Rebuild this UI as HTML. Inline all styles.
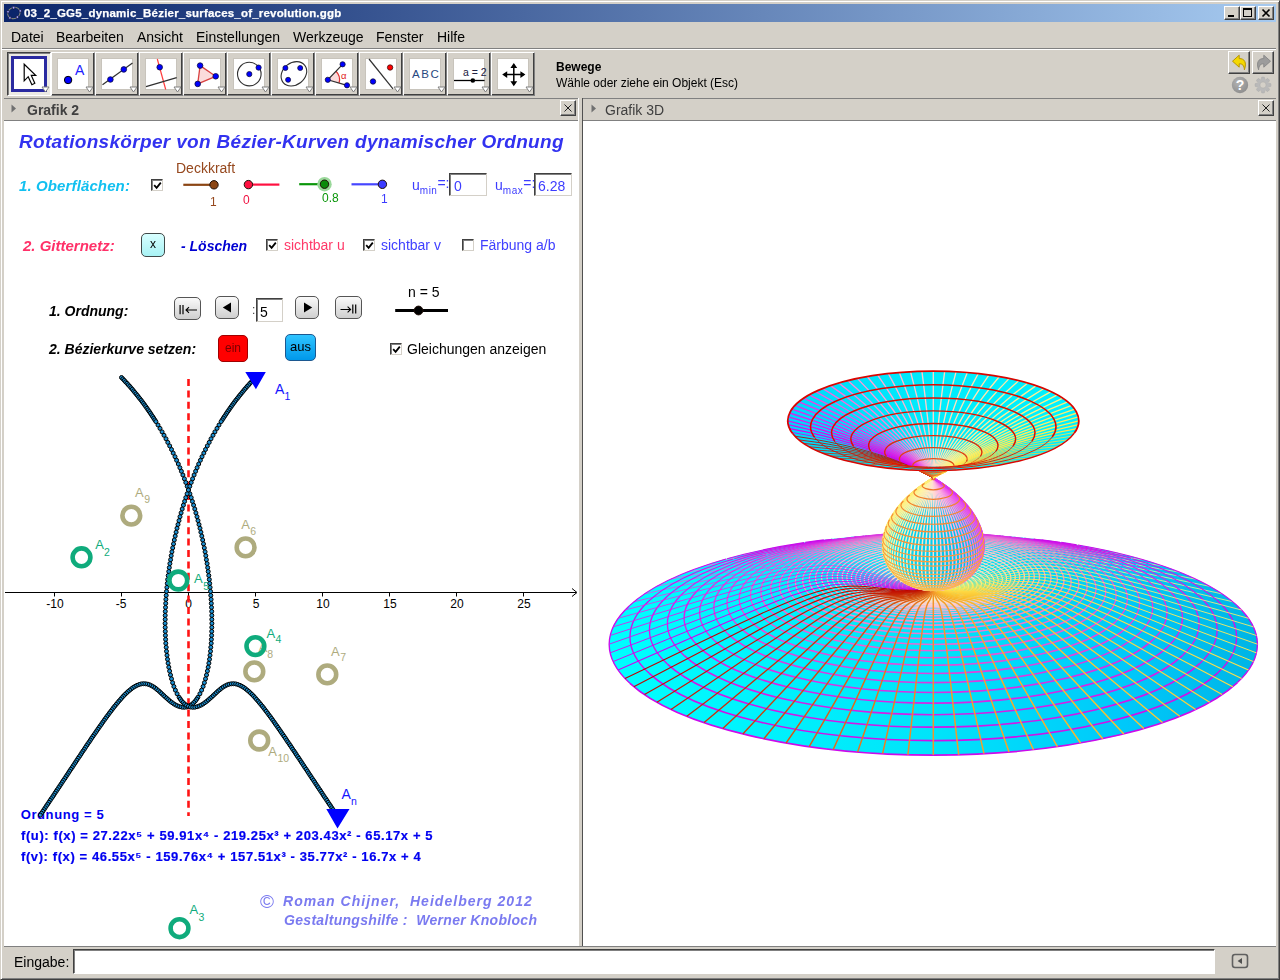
<!DOCTYPE html>
<html lang="de"><head><meta charset="utf-8"><title>GeoGebra</title>
<style>
*{box-sizing:border-box;margin:0;padding:0}
html,body{width:1280px;height:980px;overflow:hidden;background:#d4d0c8;font-family:"Liberation Sans",sans-serif;font-size:14px;color:#000}
.a{position:absolute}
.t{position:absolute;white-space:nowrap;line-height:1;will-change:transform}
.menu,.btn,.inp{will-change:transform}
#title{left:4px;top:4px;width:1272px;height:18px;background:linear-gradient(90deg,#0a246a 0%,#a6caf0 100%)}
#title .t{color:#fff;font-weight:bold;font-size:11.5px;letter-spacing:.2px;left:19.5px;top:3.5px;-webkit-text-stroke:.25px #fff}
.wb{position:absolute;top:2px;width:16px;height:14px;background:#d4d0c8;border:1px solid;border-color:#fff #404040 #404040 #fff;box-shadow:inset -1px -1px 0 #808080}
.menu{position:absolute;top:29px;font-size:14px;line-height:16px;white-space:nowrap}
.tb{position:absolute;top:52px;width:44px;height:44px;border:1px solid;border-color:#fff #808080 #808080 #fff;background:#d4d0c8}
.tb i{position:absolute;left:5px;top:5px;width:32px;height:32px;background:#fff;display:block;border:1px solid #c8c4bc}
.tb svg{position:absolute;left:6px;top:6px;overflow:visible}
.tri{position:absolute;left:34px;top:35px;width:0;height:0}
.hdr{position:absolute;top:98px;height:23px;border-top:1px solid #808080;border-bottom:1px solid #808080;background:#d4d0c8}
.xb{position:absolute;top:1px;width:16px;height:16px;background:#d4d0c8;border:1px solid;border-color:#fff #404040 #404040 #fff;box-shadow:inset -1px -1px 0 #808080}
.panel{position:absolute;background:#fff;top:121px;height:825px;overflow:hidden}
.cb{position:absolute;width:12px;height:12px;background:#fff;border:1px solid;border-color:#404040 #d4d0c8 #d4d0c8 #404040;box-shadow:inset 1px 1px 0 #808080}
.inp{position:absolute;background:#fff;border:1px solid;border-color:#404040 #d4d0c8 #d4d0c8 #404040;box-shadow:inset 1px 1px 0 #808080;font-size:14px;line-height:1;white-space:nowrap}
.btn{position:absolute;border:1px solid #555;border-radius:5px;background:linear-gradient(#fafafa,#cfcfcf);text-align:center;white-space:nowrap}
.bi{font-weight:bold;font-style:italic}
.eq{-webkit-text-stroke:.2px #0000f0}
</style></head><body>
<div class="a" style="left:0;top:0;width:1280px;height:980px;border:1px solid;border-color:#d4d0c8 #404040 #404040 #d4d0c8;box-shadow:inset 1px 1px 0 #fff,inset -1px -1px 0 #808080"></div>
<div id="title" class="a">
<svg class="a" style="left:1px;top:0" width="18" height="18" viewBox="0 0 18 18"><ellipse cx="8.9" cy="9" rx="6.4" ry="5.5" transform="rotate(-28 8.9 9)" fill="none" stroke="#8c8c7a" stroke-width="1"/><g fill="#a8a8ff" stroke="#0c0c30" stroke-width=".7"><circle cx="8.6" cy="3.7" r="1.35"/><circle cx="15.2" cy="6.9" r="1.35"/><circle cx="12.4" cy="13.1" r="1.35"/><circle cx="4.9" cy="13.9" r="1.35"/><circle cx="3" cy="7.8" r="1.35"/></g></svg>
<span class="t">03_2_GG5_dynamic_Bézier_surfaces_of_revolution.ggb</span>
<div class="wb" style="left:1220px"><div class="a" style="left:3px;top:8px;width:6px;height:2px;background:#000"></div></div>
<div class="wb" style="left:1236px"><div class="a" style="left:2px;top:1px;width:9px;height:9px;border:1px solid #000;border-top-width:2px"></div></div>
<div class="wb" style="left:1254px"><svg class="a" style="left:2px;top:1px" width="10" height="10" viewBox="0 0 10 10"><path d="M1.5 1.5L8.5 8.5M8.5 1.5L1.5 8.5" stroke="#000" stroke-width="1.7"/></svg></div>
</div>
<span class="menu" style="left:11px">Datei</span><span class="menu" style="left:56px">Bearbeiten</span><span class="menu" style="left:137px">Ansicht</span><span class="menu" style="left:196px">Einstellungen</span><span class="menu" style="left:293px">Werkzeuge</span><span class="menu" style="left:376px">Fenster</span><span class="menu" style="left:437px">Hilfe</span>
<div class="a" style="left:2px;top:48px;width:1274px;height:2px;border-top:1px solid #808080;border-bottom:1px solid #fff"></div>
<div class="tb" style="left:7px;border-color:#404040 #fff #fff #404040;box-shadow:inset 1px 1px 0 #808080;background:#eceae4"><div class="a" style="left:3px;top:3px;width:36px;height:36px;border:3px solid #2a2aa0;background:#fff"></div><svg width="31" height="31" viewBox="0 0 31 31" style="left:6px;top:6px"><path d="M10.2 5.2V21.8L14.2 17.7L17.9 25.7L20.8 24.2L17.3 16.4H21.7Z" fill="#fff" stroke="#000" stroke-width="1.2" stroke-linejoin="miter"/></svg><svg class="a" style="left:32.5px;top:33px" width="9" height="7" viewBox="0 0 9 7"><path d="M1 1H8L4.5 6Z" fill="#fff" stroke="#808080" stroke-width="1"/></svg></div>
<div class="tb" style="left:51px;box-shadow:inset -1px -1px 0 #404040"><i></i><svg width="31" height="31" viewBox="0 0 31 31"><circle cx="10.1" cy="21" r="3.7" fill="#0000ff" stroke="#000" stroke-width="1"/><text x="17" y="15.5" font-size="14" fill="#2020ff" font-family="Liberation Sans,sans-serif">A</text></svg><svg class="a" style="left:32.5px;top:33px" width="9" height="7" viewBox="0 0 9 7"><path d="M1 1H8L4.5 6Z" fill="#fff" stroke="#808080" stroke-width="1"/></svg></div>
<div class="tb" style="left:95px;box-shadow:inset -1px -1px 0 #404040"><i></i><svg width="31" height="31" viewBox="0 0 31 31"><path d="M.5 25.8L30.5 4" stroke="#303030" stroke-width="1.2"/><circle cx="8.4" cy="20.5" r="2.8" fill="#0000ff" stroke="#101040" stroke-width=".8"/><circle cx="21.8" cy="10.4" r="2.8" fill="#0000ff" stroke="#101040" stroke-width=".8"/></svg><svg class="a" style="left:32.5px;top:33px" width="9" height="7" viewBox="0 0 9 7"><path d="M1 1H8L4.5 6Z" fill="#fff" stroke="#808080" stroke-width="1"/></svg></div>
<div class="tb" style="left:139px;box-shadow:inset -1px -1px 0 #404040"><i></i><svg width="31" height="31" viewBox="0 0 31 31"><path d="M11.3 0L19.7 30.5" stroke="#ff3c3c" stroke-width="1.2"/><path d="M0 27.6L30.7 18.6" stroke="#303030" stroke-width="1.2"/><circle cx="13.7" cy="8.2" r="2.8" fill="#0000ff" stroke="#101040" stroke-width=".8"/></svg><svg class="a" style="left:32.5px;top:33px" width="9" height="7" viewBox="0 0 9 7"><path d="M1 1H8L4.5 6Z" fill="#fff" stroke="#808080" stroke-width="1"/></svg></div>
<div class="tb" style="left:183px;box-shadow:inset -1px -1px 0 #404040"><i></i><svg width="31" height="31" viewBox="0 0 31 31"><path d="M10.1 6.6L25.7 17.3L7.7 24.9Z" fill="#fbdcdc" stroke="#d84040" stroke-width="1.3"/><circle cx="10.1" cy="6.6" r="2.8" fill="#0000ff" stroke="#101040" stroke-width=".8"/><circle cx="25.7" cy="17.3" r="2.8" fill="#0000ff" stroke="#101040" stroke-width=".8"/><circle cx="7.7" cy="24.9" r="2.8" fill="#0000ff" stroke="#101040" stroke-width=".8"/></svg><svg class="a" style="left:32.5px;top:33px" width="9" height="7" viewBox="0 0 9 7"><path d="M1 1H8L4.5 6Z" fill="#fff" stroke="#808080" stroke-width="1"/></svg></div>
<div class="tb" style="left:227px;box-shadow:inset -1px -1px 0 #404040"><i></i><svg width="31" height="31" viewBox="0 0 31 31"><circle cx="15.3" cy="15.1" r="11.8" fill="none" stroke="#303030" stroke-width="1.1"/><circle cx="15.3" cy="15.1" r="2.6" fill="#0000ff" stroke="#101040" stroke-width=".8"/><circle cx="24.6" cy="8.6" r="2.6" fill="#0000ff" stroke="#101040" stroke-width=".8"/></svg><svg class="a" style="left:32.5px;top:33px" width="9" height="7" viewBox="0 0 9 7"><path d="M1 1H8L4.5 6Z" fill="#fff" stroke="#808080" stroke-width="1"/></svg></div>
<div class="tb" style="left:271px;box-shadow:inset -1px -1px 0 #404040"><i></i><svg width="31" height="31" viewBox="0 0 31 31"><ellipse cx="15.9" cy="14.8" rx="13.8" ry="11" transform="rotate(-38 15.9 14.8)" fill="none" stroke="#303030" stroke-width="1.1"/><circle cx="7.4" cy="9" r="2.5" fill="#0000ff" stroke="#101040" stroke-width=".8"/><circle cx="22.2" cy="9" r="2.5" fill="#0000ff" stroke="#101040" stroke-width=".8"/><circle cx="10.1" cy="20.8" r="2.5" fill="#0000ff" stroke="#101040" stroke-width=".8"/></svg><svg class="a" style="left:32.5px;top:33px" width="9" height="7" viewBox="0 0 9 7"><path d="M1 1H8L4.5 6Z" fill="#fff" stroke="#808080" stroke-width="1"/></svg></div>
<div class="tb" style="left:315px;box-shadow:inset -1px -1px 0 #404040"><i></i><svg width="31" height="31" viewBox="0 0 31 31"><path d="M5.8 20.8L14 12.2A11.7 11.7 0 0 1 17 24Z" fill="#fbdada" stroke="none"/><path d="M14 12.2A11.7 11.7 0 0 1 17 24" fill="none" stroke="#e03030" stroke-width="1.2"/><path d="M20.6 5.3L5.8 20.8L25 26.3" fill="none" stroke="#303030" stroke-width="1.2"/><text x="19" y="19.5" font-size="9.5" fill="#e02020" font-family="Liberation Sans,sans-serif">α</text><circle cx="5.8" cy="20.8" r="2.6" fill="#0000ff" stroke="#101040" stroke-width=".8"/><circle cx="20.6" cy="5.3" r="2.6" fill="#0000ff" stroke="#101040" stroke-width=".8"/><circle cx="25" cy="26.3" r="2.6" fill="#0000ff" stroke="#101040" stroke-width=".8"/></svg><svg class="a" style="left:32.5px;top:33px" width="9" height="7" viewBox="0 0 9 7"><path d="M1 1H8L4.5 6Z" fill="#fff" stroke="#808080" stroke-width="1"/></svg></div>
<div class="tb" style="left:359px;box-shadow:inset -1px -1px 0 #404040"><i></i><svg width="31" height="31" viewBox="0 0 31 31"><path d="M3 0L27 29.8" stroke="#303030" stroke-width="1.2"/><circle cx="24.1" cy="8.5" r="2.7" fill="#ff0000" stroke="#401010" stroke-width=".8"/><circle cx="7" cy="22.5" r="2.7" fill="#0000ff" stroke="#101040" stroke-width=".8"/></svg><svg class="a" style="left:32.5px;top:33px" width="9" height="7" viewBox="0 0 9 7"><path d="M1 1H8L4.5 6Z" fill="#fff" stroke="#808080" stroke-width="1"/></svg></div>
<div class="tb" style="left:403px;box-shadow:inset -1px -1px 0 #404040"><i></i><svg width="31" height="31" viewBox="0 0 31 31"><text x="2" y="18.7" font-size="11.5" letter-spacing="1.6" fill="#284880" font-family="Liberation Sans,sans-serif">ABC</text></svg><svg class="a" style="left:32.5px;top:33px" width="9" height="7" viewBox="0 0 9 7"><path d="M1 1H8L4.5 6Z" fill="#fff" stroke="#808080" stroke-width="1"/></svg></div>
<div class="tb" style="left:447px;box-shadow:inset -1px -1px 0 #404040"><i></i><svg width="31" height="31" viewBox="0 0 31 31"><text x="9" y="17" font-size="10.5" fill="#202040" font-family="Liberation Sans,sans-serif">a = 2</text><path d="M0 21.5H30.6" stroke="#000" stroke-width="1.3"/><circle cx="18.8" cy="21.5" r="2.3" fill="#000"/></svg><svg class="a" style="left:32.5px;top:33px" width="9" height="7" viewBox="0 0 9 7"><path d="M1 1H8L4.5 6Z" fill="#fff" stroke="#808080" stroke-width="1"/></svg></div>
<div class="tb" style="left:491px;box-shadow:inset -1px -1px 0 #404040"><i></i><svg width="31" height="31" viewBox="0 0 31 31"><path d="M6 15.6H25.6M15.8 5.8V25.4" stroke="#000" stroke-width="1.5"/><path d="M15.8 4L19.2 9H12.4ZM15.8 27.2L19.2 22.2H12.4ZM4.2 15.6L9.2 12.2V19ZM27.4 15.6L22.4 12.2V19Z" fill="#000"/></svg><svg class="a" style="left:32.5px;top:33px" width="9" height="7" viewBox="0 0 9 7"><path d="M1 1H8L4.5 6Z" fill="#fff" stroke="#808080" stroke-width="1"/></svg></div>
<span class="t" style="left:556px;top:61px;font-size:12px;font-weight:bold">Bewege</span>
<span class="t" style="left:556px;top:77px;font-size:12px">Wähle oder ziehe ein Objekt (Esc)</span>
<div class="a" style="left:1228px;top:51px;width:22px;height:23px;border:1px solid;border-color:#fff #404040 #404040 #fff;box-shadow:inset -1px -1px 0 #808080"><svg class="a" style="left:2px;top:2px" width="17" height="18" viewBox="0 0 17 18"><path d="M1.5 7.2L8.2 1.2V4.6C13.5 4.4 16 8.5 13.4 15.8C13.2 11.6 11.5 9.6 8.2 9.8V13.2Z" fill="#f5d800" stroke="#b89600" stroke-width="1" stroke-linejoin="round"/></svg></div>
<div class="a" style="left:1252px;top:51px;width:22px;height:23px;border:1px solid;border-color:#fff #404040 #404040 #fff;box-shadow:inset -1px -1px 0 #808080"><svg class="a" style="left:2px;top:2px" width="17" height="18" viewBox="0 0 17 18"><path d="M15.5 7.2L8.8 1.2V4.6C3.5 4.4 1 8.5 3.6 15.8C3.8 11.6 5.5 9.6 8.8 9.8V13.2Z" fill="#9c9c9c" stroke="#8a8a8a" stroke-width="1" stroke-linejoin="round"/></svg></div>
<svg class="a" style="left:1231px;top:76px" width="18" height="18" viewBox="0 0 18 18"><defs><radialGradient id="hg" cx=".4" cy=".35" r=".7"><stop offset="0" stop-color="#b4b4b4"/><stop offset="1" stop-color="#8c8c8c"/></radialGradient></defs><circle cx="9" cy="9" r="8.2" fill="url(#hg)"/><text x="9" y="14" font-size="14" font-weight="bold" text-anchor="middle" fill="#fff" font-family="Liberation Sans,sans-serif">?</text></svg>
<svg class="a" style="left:1254px;top:76px" width="18" height="18" viewBox="0 0 18 18"><g fill="#b8b8b8" stroke="#a8a8a8" stroke-width=".4"><rect x="7.3" y="1" width="3.4" height="4.2" rx="1" transform="rotate(0 9 9)"/><rect x="7.3" y="1" width="3.4" height="4.2" rx="1" transform="rotate(45 9 9)"/><rect x="7.3" y="1" width="3.4" height="4.2" rx="1" transform="rotate(90 9 9)"/><rect x="7.3" y="1" width="3.4" height="4.2" rx="1" transform="rotate(135 9 9)"/><rect x="7.3" y="1" width="3.4" height="4.2" rx="1" transform="rotate(180 9 9)"/><rect x="7.3" y="1" width="3.4" height="4.2" rx="1" transform="rotate(225 9 9)"/><rect x="7.3" y="1" width="3.4" height="4.2" rx="1" transform="rotate(270 9 9)"/><rect x="7.3" y="1" width="3.4" height="4.2" rx="1" transform="rotate(315 9 9)"/></g><circle cx="9" cy="9" r="4.6" fill="none" stroke="#bababa" stroke-width="2.8"/><circle cx="9" cy="9" r="3.1" fill="none" stroke="#a8a8a8" stroke-width=".5"/></svg>
<div class="hdr" style="left:4px;width:574px"><svg class="a" style="left:7px;top:5px" width="6" height="9" viewBox="0 0 6 9"><path d="M.5 .5L5 4.5L.5 8.5Z" fill="#707070"/></svg><span class="t" style="left:23px;top:4px;font-weight:bold;color:#404040">Grafik 2</span><div class="xb" style="left:556px"><svg class="a" style="left:2px;top:2px" width="10" height="10" viewBox="0 0 10 10"><path d="M1.5 1.5L8.5 8.5M8.5 1.5L1.5 8.5" stroke="#202020" stroke-width="1"/></svg></div></div>
<div class="a" style="left:578px;top:98px;width:1px;height:848px;background:#fff"></div><div class="a" style="left:582px;top:98px;width:1px;height:848px;background:#505050"></div>
<div class="hdr" style="left:583px;width:693px"><svg class="a" style="left:8px;top:5px" width="6" height="9" viewBox="0 0 6 9"><path d="M.5 .5L5 4.5L.5 8.5Z" fill="#707070"/></svg><span class="t" style="left:22px;top:4px;color:#404040">Grafik 3D</span><div class="xb" style="left:675px"><svg class="a" style="left:2px;top:2px" width="10" height="10" viewBox="0 0 10 10"><path d="M1.5 1.5L8.5 8.5M8.5 1.5L1.5 8.5" stroke="#202020" stroke-width="1"/></svg></div></div>
<div class="a" style="left:4px;top:946px;width:1272px;height:1px;background:#808080"></div>
<span class="t" style="left:14px;top:955px">Eingabe:</span>
<div class="a" style="left:73px;top:949px;width:1142px;height:25px;background:#fff;border:1px solid;border-color:#404040 #fff #fff #404040;box-shadow:inset 1px 1px 0 #808080"></div>
<svg class="a" style="left:1231px;top:953px" width="18" height="16" viewBox="0 0 18 16"><rect x="1.5" y="1.5" width="15" height="13" rx="2.5" fill="none" stroke="#606060" stroke-width="1.6"/><path d="M11 5L6.6 8L11 11Z" fill="#505050"/></svg>
<div class="panel" style="left:4px;width:574px"><svg class="a" style="left:1px;top:0" width="573" height="825" viewBox="5 121 573 825">
<path d="M5 592.5H576M54.5 592.5v4M121.5 592.5v4M255.5 592.5v4M322.5 592.5v4M389.5 592.5v4M456.5 592.5v4M523.5 592.5v4M188.5 592.5v4" stroke="#000" stroke-width="1" fill="none"/><path d="M572 588.5L577 592.5L572 596.5" stroke="#000" stroke-width="1" fill="none"/>
<g font-size="12" text-anchor="middle" font-family="Liberation Sans,sans-serif" fill="#000"><text x="55" y="608">-10</text><text x="121" y="608">-5</text><text x="188.5" y="608">0</text><text x="256" y="608">5</text><text x="323" y="608">10</text><text x="390" y="608">15</text><text x="457" y="608">20</text><text x="524" y="608">25</text></g>
<g font-family="Liberation Sans,sans-serif">
<circle cx="131.3" cy="515.6" r="8.9" fill="none" stroke="#aeab7e" stroke-width="4.6"/><text x="135" y="496.7" font-size="13" fill="#aeab7e">A</text><text x="144.3" y="502.5" font-size="10.5" fill="#aeab7e">9</text>
<circle cx="245.6" cy="547.4" r="8.9" fill="none" stroke="#aeab7e" stroke-width="4.6"/><text x="241.3" y="528.6" font-size="13" fill="#aeab7e">A</text><text x="250.3" y="534.7" font-size="10.5" fill="#aeab7e">6</text>
<circle cx="254.3" cy="671.4" r="8.9" fill="none" stroke="#aeab7e" stroke-width="4.6"/><text x="258.4" y="652.2" font-size="13" fill="#aeab7e">A</text><text x="267.3" y="658.4" font-size="10.5" fill="#aeab7e">8</text>
<circle cx="327.3" cy="674.4" r="8.9" fill="none" stroke="#aeab7e" stroke-width="4.6"/><text x="331" y="655.6" font-size="13" fill="#aeab7e">A</text><text x="340.3" y="661.3" font-size="10.5" fill="#aeab7e">7</text>
<circle cx="259.2" cy="740.5" r="8.9" fill="none" stroke="#aeab7e" stroke-width="4.6"/><text x="268.2" y="756.3" font-size="13" fill="#aeab7e">A</text><text x="277.5" y="762" font-size="10.5" fill="#aeab7e">10</text>
</g>
<text x="20.7" y="819.3" font-size="13" font-weight="bold" letter-spacing=".6" fill="#0000f0" font-family="Liberation Sans,sans-serif">Ordnung = 5</text>
<path d="M188.5 379V816" stroke="#ff1414" stroke-width="2.6" stroke-dasharray="7 4.4" fill="none"/>
<g fill="#1c90d2" stroke="#000" stroke-width="1"><circle cx="121.5" cy="377.5" r="2"/><circle cx="122.9" cy="378.9" r="2"/><circle cx="124.3" cy="380.4" r="2"/><circle cx="125.6" cy="381.9" r="2"/><circle cx="127" cy="383.3" r="2"/><circle cx="128.3" cy="384.8" r="2"/><circle cx="129.7" cy="386.3" r="2"/><circle cx="131" cy="387.8" r="2"/><circle cx="132.3" cy="389.3" r="2"/><circle cx="133.6" cy="390.9" r="2"/><circle cx="134.8" cy="392.4" r="2"/><circle cx="136.1" cy="393.9" r="2"/><circle cx="137.4" cy="395.5" r="2"/><circle cx="138.6" cy="397.1" r="2"/><circle cx="139.8" cy="398.6" r="2"/><circle cx="141.1" cy="400.2" r="2"/><circle cx="142.3" cy="401.8" r="2"/><circle cx="143.5" cy="403.4" r="2"/><circle cx="144.7" cy="405" r="2"/><circle cx="145.8" cy="406.6" r="2"/><circle cx="147" cy="408.3" r="2"/><circle cx="148.1" cy="409.9" r="2"/><circle cx="149.3" cy="411.6" r="2"/><circle cx="150.4" cy="413.2" r="2"/><circle cx="151.5" cy="414.9" r="2"/><circle cx="152.6" cy="416.5" r="2"/><circle cx="153.7" cy="418.2" r="2"/><circle cx="154.8" cy="419.9" r="2"/><circle cx="155.9" cy="421.6" r="2"/><circle cx="158" cy="425" r="2"/><circle cx="160" cy="428.4" r="2"/><circle cx="162.1" cy="431.9" r="2"/><circle cx="164" cy="435.3" r="2"/><circle cx="166" cy="438.8" r="2"/><circle cx="167.8" cy="442.4" r="2"/><circle cx="169.7" cy="445.9" r="2"/><circle cx="171.5" cy="449.5" r="2"/><circle cx="173.2" cy="453.1" r="2"/><circle cx="175" cy="456.7" r="2"/><circle cx="176.6" cy="460.3" r="2"/><circle cx="178.3" cy="464" r="2"/><circle cx="179.9" cy="467.7" r="2"/><circle cx="181.4" cy="471.3" r="2"/><circle cx="182.9" cy="475" r="2"/><circle cx="184.4" cy="478.8" r="2"/><circle cx="185.8" cy="482.5" r="2"/><circle cx="187.2" cy="486.3" r="2"/><circle cx="188.6" cy="490" r="2"/><circle cx="189.9" cy="493.8" r="2"/><circle cx="191.2" cy="497.6" r="2"/><circle cx="192.4" cy="501.4" r="2"/><circle cx="193.6" cy="505.2" r="2"/><circle cx="194.8" cy="509" r="2"/><circle cx="195.9" cy="512.9" r="2"/><circle cx="197" cy="516.7" r="2"/><circle cx="198" cy="520.6" r="2"/><circle cx="199" cy="524.5" r="2"/><circle cx="200" cy="528.3" r="2"/><circle cx="200.9" cy="532.2" r="2"/><circle cx="201.8" cy="536.1" r="2"/><circle cx="202.7" cy="540" r="2"/><circle cx="203.5" cy="543.9" r="2"/><circle cx="204.3" cy="547.9" r="2"/><circle cx="205.1" cy="551.8" r="2"/><circle cx="205.8" cy="555.7" r="2"/><circle cx="206.4" cy="559.7" r="2"/><circle cx="207.1" cy="563.6" r="2"/><circle cx="207.7" cy="567.6" r="2"/><circle cx="208.2" cy="571.5" r="2"/><circle cx="208.8" cy="575.5" r="2"/><circle cx="209.3" cy="579.5" r="2"/><circle cx="209.7" cy="583.4" r="2"/><circle cx="210.1" cy="587.4" r="2"/><circle cx="210.5" cy="591.4" r="2"/><circle cx="210.8" cy="595.4" r="2"/><circle cx="211.1" cy="599.4" r="2"/><circle cx="211.3" cy="603.4" r="2"/><circle cx="211.5" cy="607.4" r="2"/><circle cx="211.7" cy="611.4" r="2"/><circle cx="211.8" cy="615.4" r="2"/><circle cx="211.8" cy="619.4" r="2"/><circle cx="211.9" cy="623.4" r="2"/><circle cx="211.8" cy="627.4" r="2"/><circle cx="211.7" cy="631.4" r="2"/><circle cx="211.6" cy="635.4" r="2"/><circle cx="211.4" cy="639.4" r="2"/><circle cx="211.2" cy="643.3" r="2"/><circle cx="210.8" cy="647.3" r="2"/><circle cx="210.5" cy="651.3" r="2"/><circle cx="210" cy="655.3" r="2"/><circle cx="209.5" cy="659.3" r="2"/><circle cx="208.9" cy="663.2" r="2"/><circle cx="208.2" cy="667.2" r="2"/><circle cx="207.4" cy="671.1" r="2"/><circle cx="206.5" cy="675" r="2"/><circle cx="205.5" cy="678.8" r="2"/><circle cx="204.4" cy="682.7" r="2"/><circle cx="203.1" cy="686.5" r="2"/><circle cx="201.6" cy="690.2" r="2"/><circle cx="199.9" cy="693.8" r="2"/><circle cx="197.9" cy="697.3" r="2"/><circle cx="196.7" cy="699.1" r="2"/><circle cx="195.4" cy="700.9" r="2"/><circle cx="193.9" cy="702.5" r="2"/><circle cx="192.3" cy="704" r="2"/><circle cx="190.5" cy="705.3" r="2"/><circle cx="188.6" cy="706.3" r="2"/><circle cx="186.5" cy="707" r="2"/><circle cx="184.3" cy="707.3" r="2"/><circle cx="182.1" cy="707.2" r="2"/><circle cx="179.9" cy="706.7" r="2"/><circle cx="177.9" cy="706" r="2"/><circle cx="175.9" cy="705.1" r="2"/><circle cx="174" cy="704" r="2"/><circle cx="172.2" cy="702.7" r="2"/><circle cx="170.4" cy="701.4" r="2"/><circle cx="168.7" cy="700" r="2"/><circle cx="167.1" cy="698.5" r="2"/><circle cx="165.4" cy="697.1" r="2"/><circle cx="163.8" cy="695.6" r="2"/><circle cx="162.2" cy="694.1" r="2"/><circle cx="160.6" cy="692.6" r="2"/><circle cx="159" cy="691.1" r="2"/><circle cx="157.3" cy="689.7" r="2"/><circle cx="155.6" cy="688.3" r="2"/><circle cx="153.8" cy="687" r="2"/><circle cx="151.9" cy="685.9" r="2"/><circle cx="149.9" cy="684.9" r="2"/><circle cx="147.9" cy="684.2" r="2"/><circle cx="145.7" cy="683.8" r="2"/><circle cx="143.5" cy="683.7" r="2"/><circle cx="141.3" cy="683.9" r="2"/><circle cx="139.2" cy="684.5" r="2"/><circle cx="137.1" cy="685.3" r="2"/><circle cx="135.2" cy="686.3" r="2"/><circle cx="133.3" cy="687.4" r="2"/><circle cx="131.5" cy="688.7" r="2"/><circle cx="129.8" cy="690.1" r="2"/><circle cx="128.1" cy="691.5" r="2"/><circle cx="126.5" cy="693" r="2"/><circle cx="124.9" cy="694.5" r="2"/><circle cx="123.4" cy="696.1" r="2"/><circle cx="121.9" cy="697.7" r="2"/><circle cx="120.5" cy="699.4" r="2"/><circle cx="119" cy="701" r="2"/><circle cx="117.6" cy="702.7" r="2"/><circle cx="116.2" cy="704.4" r="2"/><circle cx="114.8" cy="706.1" r="2"/><circle cx="113.4" cy="707.8" r="2"/><circle cx="112.1" cy="709.6" r="2"/><circle cx="110.8" cy="711.3" r="2"/><circle cx="109.4" cy="713.1" r="2"/><circle cx="108.1" cy="714.9" r="2"/><circle cx="106.8" cy="716.6" r="2"/><circle cx="105.5" cy="718.4" r="2"/><circle cx="104.2" cy="720.2" r="2"/><circle cx="102.9" cy="722" r="2"/><circle cx="101.7" cy="723.8" r="2"/><circle cx="100.4" cy="725.6" r="2"/><circle cx="99.1" cy="727.4" r="2"/><circle cx="97.9" cy="729.2" r="2"/><circle cx="96.6" cy="731" r="2"/><circle cx="95.4" cy="732.8" r="2"/><circle cx="94.1" cy="734.6" r="2"/><circle cx="92.9" cy="736.4" r="2"/><circle cx="91.6" cy="738.2" r="2"/><circle cx="90.4" cy="740.1" r="2"/><circle cx="89.2" cy="741.9" r="2"/><circle cx="87.9" cy="743.7" r="2"/><circle cx="86.7" cy="745.5" r="2"/><circle cx="85.5" cy="747.3" r="2"/><circle cx="84.3" cy="749.2" r="2"/><circle cx="83" cy="751" r="2"/><circle cx="81.8" cy="752.8" r="2"/><circle cx="80.6" cy="754.7" r="2"/><circle cx="79.4" cy="756.5" r="2"/><circle cx="78.1" cy="758.3" r="2"/><circle cx="76.9" cy="760.2" r="2"/><circle cx="75.7" cy="762" r="2"/><circle cx="74.5" cy="763.8" r="2"/><circle cx="73.3" cy="765.6" r="2"/><circle cx="72.1" cy="767.5" r="2"/><circle cx="70.8" cy="769.3" r="2"/><circle cx="69.6" cy="771.1" r="2"/><circle cx="68.4" cy="773" r="2"/><circle cx="67.2" cy="774.8" r="2"/><circle cx="66" cy="776.6" r="2"/><circle cx="64.8" cy="778.5" r="2"/><circle cx="63.5" cy="780.3" r="2"/><circle cx="62.3" cy="782.1" r="2"/><circle cx="61.1" cy="784" r="2"/><circle cx="59.9" cy="785.8" r="2"/><circle cx="58.7" cy="787.6" r="2"/><circle cx="57.4" cy="789.5" r="2"/><circle cx="56.2" cy="791.3" r="2"/><circle cx="55" cy="793.1" r="2"/><circle cx="53.8" cy="795" r="2"/><circle cx="52.6" cy="796.8" r="2"/><circle cx="51.3" cy="798.6" r="2"/><circle cx="50.1" cy="800.4" r="2"/><circle cx="48.9" cy="802.3" r="2"/><circle cx="47.7" cy="804.1" r="2"/><circle cx="46.4" cy="805.9" r="2"/><circle cx="45.2" cy="807.8" r="2"/><circle cx="44" cy="809.6" r="2"/><circle cx="42.8" cy="811.4" r="2"/><circle cx="41.5" cy="813.2" r="2"/><circle cx="40.3" cy="815.1" r="2"/><circle cx="255.5" cy="377.5" r="2"/><circle cx="254.1" cy="378.9" r="2"/><circle cx="252.7" cy="380.4" r="2"/><circle cx="251.4" cy="381.9" r="2"/><circle cx="250" cy="383.3" r="2"/><circle cx="248.7" cy="384.8" r="2"/><circle cx="247.3" cy="386.3" r="2"/><circle cx="246" cy="387.8" r="2"/><circle cx="244.7" cy="389.3" r="2"/><circle cx="243.4" cy="390.9" r="2"/><circle cx="242.2" cy="392.4" r="2"/><circle cx="240.9" cy="393.9" r="2"/><circle cx="239.6" cy="395.5" r="2"/><circle cx="238.4" cy="397.1" r="2"/><circle cx="237.2" cy="398.6" r="2"/><circle cx="235.9" cy="400.2" r="2"/><circle cx="234.7" cy="401.8" r="2"/><circle cx="233.5" cy="403.4" r="2"/><circle cx="232.3" cy="405" r="2"/><circle cx="231.2" cy="406.6" r="2"/><circle cx="230" cy="408.3" r="2"/><circle cx="228.9" cy="409.9" r="2"/><circle cx="227.7" cy="411.6" r="2"/><circle cx="226.6" cy="413.2" r="2"/><circle cx="225.5" cy="414.9" r="2"/><circle cx="224.4" cy="416.5" r="2"/><circle cx="223.3" cy="418.2" r="2"/><circle cx="222.2" cy="419.9" r="2"/><circle cx="221.1" cy="421.6" r="2"/><circle cx="219" cy="425" r="2"/><circle cx="217" cy="428.4" r="2"/><circle cx="214.9" cy="431.9" r="2"/><circle cx="213" cy="435.3" r="2"/><circle cx="211" cy="438.8" r="2"/><circle cx="209.2" cy="442.4" r="2"/><circle cx="207.3" cy="445.9" r="2"/><circle cx="205.5" cy="449.5" r="2"/><circle cx="203.8" cy="453.1" r="2"/><circle cx="202" cy="456.7" r="2"/><circle cx="200.4" cy="460.3" r="2"/><circle cx="198.7" cy="464" r="2"/><circle cx="197.1" cy="467.7" r="2"/><circle cx="195.6" cy="471.3" r="2"/><circle cx="194.1" cy="475" r="2"/><circle cx="192.6" cy="478.8" r="2"/><circle cx="191.2" cy="482.5" r="2"/><circle cx="189.8" cy="486.3" r="2"/><circle cx="188.4" cy="490" r="2"/><circle cx="187.1" cy="493.8" r="2"/><circle cx="185.8" cy="497.6" r="2"/><circle cx="184.6" cy="501.4" r="2"/><circle cx="183.4" cy="505.2" r="2"/><circle cx="182.2" cy="509" r="2"/><circle cx="181.1" cy="512.9" r="2"/><circle cx="180" cy="516.7" r="2"/><circle cx="179" cy="520.6" r="2"/><circle cx="178" cy="524.5" r="2"/><circle cx="177" cy="528.3" r="2"/><circle cx="176.1" cy="532.2" r="2"/><circle cx="175.2" cy="536.1" r="2"/><circle cx="174.3" cy="540" r="2"/><circle cx="173.5" cy="543.9" r="2"/><circle cx="172.7" cy="547.9" r="2"/><circle cx="171.9" cy="551.8" r="2"/><circle cx="171.2" cy="555.7" r="2"/><circle cx="170.6" cy="559.7" r="2"/><circle cx="169.9" cy="563.6" r="2"/><circle cx="169.3" cy="567.6" r="2"/><circle cx="168.8" cy="571.5" r="2"/><circle cx="168.2" cy="575.5" r="2"/><circle cx="167.7" cy="579.5" r="2"/><circle cx="167.3" cy="583.4" r="2"/><circle cx="166.9" cy="587.4" r="2"/><circle cx="166.5" cy="591.4" r="2"/><circle cx="166.2" cy="595.4" r="2"/><circle cx="165.9" cy="599.4" r="2"/><circle cx="165.7" cy="603.4" r="2"/><circle cx="165.5" cy="607.4" r="2"/><circle cx="165.3" cy="611.4" r="2"/><circle cx="165.2" cy="615.4" r="2"/><circle cx="165.2" cy="619.4" r="2"/><circle cx="165.1" cy="623.4" r="2"/><circle cx="165.2" cy="627.4" r="2"/><circle cx="165.3" cy="631.4" r="2"/><circle cx="165.4" cy="635.4" r="2"/><circle cx="165.6" cy="639.4" r="2"/><circle cx="165.8" cy="643.3" r="2"/><circle cx="166.2" cy="647.3" r="2"/><circle cx="166.5" cy="651.3" r="2"/><circle cx="167" cy="655.3" r="2"/><circle cx="167.5" cy="659.3" r="2"/><circle cx="168.1" cy="663.2" r="2"/><circle cx="168.8" cy="667.2" r="2"/><circle cx="169.6" cy="671.1" r="2"/><circle cx="170.5" cy="675" r="2"/><circle cx="171.5" cy="678.8" r="2"/><circle cx="172.6" cy="682.7" r="2"/><circle cx="173.9" cy="686.5" r="2"/><circle cx="175.4" cy="690.2" r="2"/><circle cx="177.1" cy="693.8" r="2"/><circle cx="179.1" cy="697.3" r="2"/><circle cx="180.3" cy="699.1" r="2"/><circle cx="181.6" cy="700.9" r="2"/><circle cx="183.1" cy="702.5" r="2"/><circle cx="184.7" cy="704" r="2"/><circle cx="186.5" cy="705.3" r="2"/><circle cx="188.4" cy="706.3" r="2"/><circle cx="190.5" cy="707" r="2"/><circle cx="192.7" cy="707.3" r="2"/><circle cx="194.9" cy="707.2" r="2"/><circle cx="197.1" cy="706.7" r="2"/><circle cx="199.1" cy="706" r="2"/><circle cx="201.1" cy="705.1" r="2"/><circle cx="203" cy="704" r="2"/><circle cx="204.8" cy="702.7" r="2"/><circle cx="206.6" cy="701.4" r="2"/><circle cx="208.3" cy="700" r="2"/><circle cx="209.9" cy="698.5" r="2"/><circle cx="211.6" cy="697.1" r="2"/><circle cx="213.2" cy="695.6" r="2"/><circle cx="214.8" cy="694.1" r="2"/><circle cx="216.4" cy="692.6" r="2"/><circle cx="218" cy="691.1" r="2"/><circle cx="219.7" cy="689.7" r="2"/><circle cx="221.4" cy="688.3" r="2"/><circle cx="223.2" cy="687" r="2"/><circle cx="225.1" cy="685.9" r="2"/><circle cx="227.1" cy="684.9" r="2"/><circle cx="229.1" cy="684.2" r="2"/><circle cx="231.3" cy="683.8" r="2"/><circle cx="233.5" cy="683.7" r="2"/><circle cx="235.7" cy="683.9" r="2"/><circle cx="237.8" cy="684.5" r="2"/><circle cx="239.9" cy="685.3" r="2"/><circle cx="241.8" cy="686.3" r="2"/><circle cx="243.7" cy="687.4" r="2"/><circle cx="245.5" cy="688.7" r="2"/><circle cx="247.2" cy="690.1" r="2"/><circle cx="248.9" cy="691.5" r="2"/><circle cx="250.5" cy="693" r="2"/><circle cx="252.1" cy="694.5" r="2"/><circle cx="253.6" cy="696.1" r="2"/><circle cx="255.1" cy="697.7" r="2"/><circle cx="256.5" cy="699.4" r="2"/><circle cx="258" cy="701" r="2"/><circle cx="259.4" cy="702.7" r="2"/><circle cx="260.8" cy="704.4" r="2"/><circle cx="262.2" cy="706.1" r="2"/><circle cx="263.6" cy="707.8" r="2"/><circle cx="264.9" cy="709.6" r="2"/><circle cx="266.2" cy="711.3" r="2"/><circle cx="267.6" cy="713.1" r="2"/><circle cx="268.9" cy="714.9" r="2"/><circle cx="270.2" cy="716.6" r="2"/><circle cx="271.5" cy="718.4" r="2"/><circle cx="272.8" cy="720.2" r="2"/><circle cx="274.1" cy="722" r="2"/><circle cx="275.3" cy="723.8" r="2"/><circle cx="276.6" cy="725.6" r="2"/><circle cx="277.9" cy="727.4" r="2"/><circle cx="279.1" cy="729.2" r="2"/><circle cx="280.4" cy="731" r="2"/><circle cx="281.6" cy="732.8" r="2"/><circle cx="282.9" cy="734.6" r="2"/><circle cx="284.1" cy="736.4" r="2"/><circle cx="285.4" cy="738.2" r="2"/><circle cx="286.6" cy="740.1" r="2"/><circle cx="287.8" cy="741.9" r="2"/><circle cx="289.1" cy="743.7" r="2"/><circle cx="290.3" cy="745.5" r="2"/><circle cx="291.5" cy="747.3" r="2"/><circle cx="292.7" cy="749.2" r="2"/><circle cx="294" cy="751" r="2"/><circle cx="295.2" cy="752.8" r="2"/><circle cx="296.4" cy="754.7" r="2"/><circle cx="297.6" cy="756.5" r="2"/><circle cx="298.9" cy="758.3" r="2"/><circle cx="300.1" cy="760.2" r="2"/><circle cx="301.3" cy="762" r="2"/><circle cx="302.5" cy="763.8" r="2"/><circle cx="303.7" cy="765.6" r="2"/><circle cx="304.9" cy="767.5" r="2"/><circle cx="306.2" cy="769.3" r="2"/><circle cx="307.4" cy="771.1" r="2"/><circle cx="308.6" cy="773" r="2"/><circle cx="309.8" cy="774.8" r="2"/><circle cx="311" cy="776.6" r="2"/><circle cx="312.2" cy="778.5" r="2"/><circle cx="313.5" cy="780.3" r="2"/><circle cx="314.7" cy="782.1" r="2"/><circle cx="315.9" cy="784" r="2"/><circle cx="317.1" cy="785.8" r="2"/><circle cx="318.3" cy="787.6" r="2"/><circle cx="319.6" cy="789.5" r="2"/><circle cx="320.8" cy="791.3" r="2"/><circle cx="322" cy="793.1" r="2"/><circle cx="323.2" cy="795" r="2"/><circle cx="324.4" cy="796.8" r="2"/><circle cx="325.7" cy="798.6" r="2"/><circle cx="326.9" cy="800.4" r="2"/><circle cx="328.1" cy="802.3" r="2"/><circle cx="329.3" cy="804.1" r="2"/><circle cx="330.6" cy="805.9" r="2"/><circle cx="331.8" cy="807.8" r="2"/><circle cx="333" cy="809.6" r="2"/><circle cx="334.2" cy="811.4" r="2"/><circle cx="335.5" cy="813.2" r="2"/><circle cx="336.7" cy="815.1" r="2"/></g>
<g font-family="Liberation Sans,sans-serif">
<circle cx="81.5" cy="557.3" r="8.9" fill="none" stroke="#0fab7c" stroke-width="4.6"/><text x="95.2" y="549" font-size="13" fill="#0fab7c">A</text><text x="104" y="555.6" font-size="10.5" fill="#0fab7c">2</text>
<circle cx="178.3" cy="580.5" r="8.9" fill="none" stroke="#0fab7c" stroke-width="4.6"/><text x="194" y="583" font-size="13" fill="#0fab7c">A</text><text x="203.3" y="589.5" font-size="10.5" fill="#0fab7c">5</text>
<circle cx="255.4" cy="646.1" r="8.9" fill="none" stroke="#0fab7c" stroke-width="4.6"/><text x="266.5" y="637.5" font-size="13" fill="#0fab7c">A</text><text x="275.5" y="643.3" font-size="10.5" fill="#0fab7c">4</text>
<circle cx="179.5" cy="928.2" r="8.9" fill="none" stroke="#0fab7c" stroke-width="4.6"/><text x="189.4" y="914.4" font-size="13" fill="#0fab7c">A</text><text x="198.6" y="921" font-size="10.5" fill="#0fab7c">3</text>
</g>
<path d="M245.3 372H265.8L255.9 389.2ZM326.3 809H349.5L337.5 828.4Z" fill="#0000ff"/>
<g font-family="Liberation Sans,sans-serif" fill="#1414ff"><text x="275" y="394" font-size="14">A</text><text x="284.5" y="399.5" font-size="10.5">1</text><text x="341.5" y="799" font-size="14">A</text><text x="351" y="804.5" font-size="10.5">n</text></g>
<path d="M183.3 184.8H214" stroke="#8b4513" stroke-width="2.2"/><circle cx="214" cy="184.8" r="4.2" fill="#8b4513" stroke="#201008" stroke-width="1"/>
<path d="M248.4 184.6H279.4" stroke="#ff1040" stroke-width="2.2"/><circle cx="248.4" cy="184.6" r="4.2" fill="#ff1040" stroke="#201008" stroke-width="1"/>
<path d="M299.2 184.2H324.5" stroke="#0a960a" stroke-width="2.2"/><circle cx="324.5" cy="184.2" r="7.2" fill="#9ad89a"/><circle cx="324.5" cy="184.2" r="4.2" fill="#0a8a0a" stroke="#201008" stroke-width="1"/>
<path d="M351.5 184.3H382.4" stroke="#4646ff" stroke-width="2.2"/><circle cx="382.4" cy="184.3" r="4.2" fill="#3c3cff" stroke="#201008" stroke-width="1"/>
<path d="M395.2 310.5H448" stroke="#000" stroke-width="3.2"/><circle cx="418.5" cy="310.5" r="4.4" fill="#000" stroke="#201008" stroke-width="1"/>
</svg>
<div class="a" style="left:-4px;top:-121px"><span class="t bi" style="left:19px;top:132.3px;font-size:19px;color:#3232f0;letter-spacing:.32px">Rotationskörper von Bézier-Kurven dynamischer Ordnung</span>
<span class="t bi" style="left:19px;top:177.7px;font-size:15px;color:#12c0f0;letter-spacing:.12px">1. Oberflächen:</span>
<div class="cb" style="left:151px;top:179px"><svg class="a" style="left:1px;top:1px" width="9" height="9" viewBox="0 0 9 9"><path d="M1.2 4.2L3.6 6.8L7.8 1.6" fill="none" stroke="#000" stroke-width="1.8"/></svg></div>
<span class="t" style="left:176px;top:160.5px;font-size:14px;color:#96481e">Deckkraft</span>
<span class="t" style="left:209.5px;top:196.2px;font-size:12px;color:#96481e">1</span>
<span class="t" style="left:243px;top:193.8px;font-size:12px;color:#f01040">0</span>
<span class="t" style="left:322px;top:191.8px;font-size:12px;color:#0a960a">0.8</span>
<span class="t" style="left:380.5px;top:192.8px;font-size:12px;color:#3c3cff">1</span>
<span class="t" style="left:412px;top:178.1px;font-size:14px;color:#3c3cff">u<span style="font-size:10px;position:relative;top:4px;letter-spacing:.5px">min</span><span style="position:relative;top:-2px">=:</span></span>
<div class="inp" style="left:449px;top:173px;width:38px;height:23px;color:#3c3cff;padding:5px 0 0 4px">0</div>
<span class="t" style="left:494.5px;top:178.1px;font-size:14px;color:#3c3cff">u<span style="font-size:10px;position:relative;top:4px;letter-spacing:.5px">max</span><span style="position:relative;top:-2px">=:</span></span>
<div class="inp" style="left:534px;top:173px;width:38px;height:23px;color:#3c3cff;padding:5px 0 0 3px">6.28</div>
<span class="t bi" style="left:23px;top:238.1px;font-size:15px;color:#ff3068">2. Gitternetz:</span>
<div class="btn" style="left:141px;top:233px;width:24px;height:24px;background:linear-gradient(#d8ffff,#a8f2f4);border-color:#404848;font-size:12px;line-height:21px">x</div>
<span class="t bi" style="left:180.5px;top:238.5px;font-size:14px;color:#0000d2">- Löschen</span>
<div class="cb" style="left:266px;top:239px"><svg class="a" style="left:1px;top:1px" width="9" height="9" viewBox="0 0 9 9"><path d="M1.2 4.2L3.6 6.8L7.8 1.6" fill="none" stroke="#000" stroke-width="1.8"/></svg></div>
<span class="t" style="left:283.8px;top:237.6px;font-size:14px;color:#ff3868">sichtbar u</span>
<div class="cb" style="left:363px;top:239px"><svg class="a" style="left:1px;top:1px" width="9" height="9" viewBox="0 0 9 9"><path d="M1.2 4.2L3.6 6.8L7.8 1.6" fill="none" stroke="#000" stroke-width="1.8"/></svg></div>
<span class="t" style="left:380.8px;top:237.6px;font-size:14px;color:#4040ff">sichtbar v</span>
<div class="cb" style="left:462px;top:239px"></div>
<span class="t" style="left:479.5px;top:237.6px;font-size:14px;color:#4040ff">Färbung a/b</span>
<span class="t bi" style="left:49.2px;top:303.7px;font-size:14px;">1. Ordnung:</span>
<div class="btn" style="left:174px;top:297px;width:27px;height:23px;font-size:0;line-height:0;color:transparent"><svg class="a" style="left:0;top:0" width="25" height="21" viewBox="175 298 25 21"><path d="M180.1 305V314.2M183 305V314.2" stroke="#000" stroke-width="1.2"/><path d="M186 310H197M189 307.2L186 310L189 312.8" stroke="#000" stroke-width="1.1" fill="none"/></svg>II←</div>
<div class="btn" style="left:215px;top:296px;width:24px;height:23px"><svg class="a" style="left:6px;top:5px" width="10" height="11" viewBox="0 0 10 11"><path d="M9 .5V10.5L.8 5.5Z" fill="#000"/></svg></div>
<span class="t" style="left:252px;top:303.8px;font-size:12px;color:#404040">:</span>
<div class="inp" style="left:256px;top:298px;width:27px;height:24px;padding:6px 0 0 3px">5</div>
<div class="btn" style="left:295px;top:296px;width:24px;height:23px"><svg class="a" style="left:7px;top:5px" width="10" height="11" viewBox="0 0 10 11"><path d="M1 .5V10.5L9.2 5.5Z" fill="#000"/></svg></div>
<div class="btn" style="left:335px;top:296px;width:27px;height:23px;font-size:0;line-height:0;color:transparent"><svg class="a" style="left:0;top:0" width="25" height="21" viewBox="336 297 25 21"><path d="M352.8 304.6V313.6M355.7 304.6V313.6" stroke="#000" stroke-width="1.2"/><path d="M340.5 309.5H350.5M347.6 306.7L350.6 309.5L347.6 312.3" stroke="#000" stroke-width="1.1" fill="none"/></svg>→II</div>
<span class="t" style="left:408.4px;top:284.8px;font-size:14px;">n = 5</span>
<span class="t bi" style="left:49.2px;top:341.9px;font-size:14px;">2. Bézierkurve setzen:</span>
<div class="btn" style="left:218px;top:335px;width:30px;height:27px;background:#ff0000;border-color:#a00000;color:#780000;font-size:12px;line-height:25px">ein</div>
<div class="btn" style="left:285px;top:334px;width:31px;height:27px;background:linear-gradient(#30c4ff,#0098ea);border-color:#1c5890;font-size:13px;line-height:23px">aus</div>
<div class="cb" style="left:390px;top:343px"><svg class="a" style="left:1px;top:1px" width="9" height="9" viewBox="0 0 9 9"><path d="M1.2 4.2L3.6 6.8L7.8 1.6" fill="none" stroke="#000" stroke-width="1.8"/></svg></div>
<span class="t" style="left:407.3px;top:341.6px;font-size:14px;">Gleichungen anzeigen</span>
<span class="t eq" style="left:20.7px;top:829.4px;font-size:13px;color:#0000f0;font-weight:bold;letter-spacing:.6px">f(u): f(x) = 27.22x⁵ + 59.91x⁴ - 219.25x³ + 203.43x² - 65.17x + 5</span>
<span class="t eq" style="left:20.7px;top:849.5px;font-size:13px;color:#0000f0;font-weight:bold;letter-spacing:.6px">f(v): f(x) = 46.55x⁵ - 159.76x⁴ + 157.51x³ - 35.77x² - 16.7x + 4</span>
<span class="t" style="left:260px;top:892.2px;font-size:19px;color:#7a7af0">©</span>
<span class="t bi cr" style="left:283.3px;top:893.9px;font-size:14px;color:#7a7af0;letter-spacing:1.03px">Roman Chijner,&nbsp; Heidelberg 2012</span>
<span class="t bi cr" style="left:284px;top:913.1px;font-size:14px;color:#7a7af0;letter-spacing:.31px">Gestaltungshilfe :&nbsp; Werner Knobloch</span>
</div></div>
<div class="panel" style="left:583px;width:693px"><svg width="692" height="823" viewBox="584 122 692 823" class="a" style="left:1px;top:1px"><defs>
<linearGradient id="g_disc" gradientUnits="userSpaceOnUse" x1="609" y1="0" x2="1257" y2="0"><stop offset="0" stop-color="#00ffff"/><stop offset="0.5" stop-color="#00e4fa"/><stop offset="0.8" stop-color="#00c8fa"/><stop offset="1" stop-color="#00b4e6"/></linearGradient>
<linearGradient id="g_drop" gradientUnits="userSpaceOnUse" x1="881" y1="0" x2="985" y2="0"><stop offset="0" stop-color="#00e0f8"/><stop offset="1" stop-color="#00b8e6"/></linearGradient>
<linearGradient id="g_bowl" gradientUnits="userSpaceOnUse" x1="787" y1="0" x2="1079" y2="0"><stop offset="0" stop-color="#00d8fa"/><stop offset="0.5" stop-color="#00ecfc"/><stop offset="1" stop-color="#00f0ff"/></linearGradient>
</defs><path d="M609.2 640.5 609.2 648.2 609.5 648.5 609.5 650.5 609.8 650.8 610.2 653.8 610.8 655.2 611.5 658.2 613.8 662.8 613.8 663.5 619.8 672.8 623.2 676.8 623.5 676.8 629.5 683.2 634.5 687.5 641.2 692.5 644.5 694.5 645.5 695.5 657.2 702.5 669.5 708.8 670.2 708.8 677.5 712.5 678.2 712.5 682.8 714.8 687.8 716.5 692.2 718.5 694.8 719.2 697.5 720.5 717.5 727.2 719.8 727.5 725.5 729.5 727.8 729.8 731.5 731.2 733.8 731.5 735.2 732.2 736.5 732.2 737.8 732.8 738.8 732.8 747.2 735.2 748.5 735.2 748.8 735.5 752.8 736.2 755.8 737.2 757.2 737.2 758.8 737.8 761.8 738.2 763.5 738.8 764.8 738.8 765.2 739.2 766.5 739.2 766.8 739.5 768.2 739.5 768.5 739.8 769.8 739.8 770.2 740.2 771.5 740.2 771.8 740.5 773.2 740.5 773.5 740.8 774.8 740.8 775.2 741.2 776.5 741.2 778.5 741.8 782.2 742.2 784.2 742.8 785.8 742.8 786.2 743.2 787.8 743.2 788.2 743.5 789.8 743.5 790.2 743.8 791.8 743.8 792.2 744.2 795.8 744.5 796.2 744.8 797.8 744.8 800.2 745.5 802.5 745.5 802.8 745.8 804.5 745.8 806.8 746.5 809.2 746.5 809.5 746.8 816.5 747.5 816.8 747.8 819.2 747.8 819.5 748.2 824.2 748.5 824.5 748.8 826.8 748.8 827.2 749.2 830.2 749.2 830.5 749.5 832.8 749.5 833.2 749.8 839.2 750.2 839.5 750.5 845.5 750.8 845.8 751.2 849.2 751.2 849.5 751.5 852.8 751.5 853.2 751.8 856.8 751.8 857.2 752.2 870.2 752.8 870.5 753.2 875.5 753.2 875.8 753.5 881.2 753.5 881.5 753.8 887.5 753.8 887.8 754.2 904.5 754.5 904.8 754.8 919.2 754.8 919.5 755.2 947.2 755.2 947.5 754.8 961.8 754.8 962.2 754.5 978.8 754.2 979.2 753.8 985.2 753.8 985.5 753.5 990.8 753.5 991.2 753.2 996.2 753.2 996.5 752.8 1000.5 752.8 1000.8 752.5 1013.5 751.8 1013.8 751.5 1017.2 751.5 1017.5 751.2 1024.2 750.8 1024.5 750.5 1027.2 750.5 1027.5 750.2 1030.5 750.2 1030.8 749.8 1033.5 749.8 1033.8 749.5 1036.2 749.5 1036.5 749.2 1042.2 748.8 1042.5 748.5 1044.8 748.5 1045.2 748.2 1047.2 748.2 1047.5 747.8 1052.5 747.5 1052.8 747.2 1061.8 746.2 1064.2 745.5 1068.5 745.2 1068.8 744.8 1070.5 744.8 1070.8 744.5 1080.5 743.2 1082.5 742.5 1086.2 742.2 1088.2 741.5 1089.8 741.5 1090.2 741.2 1099.8 739.5 1101.5 738.8 1103.2 738.8 1104.8 738.2 1107.8 737.8 1109.5 737.2 1110.8 737.2 1113.8 736.2 1115.2 736.2 1118.2 735.2 1119.5 735.2 1119.8 734.8 1128.8 732.8 1130.2 732.2 1133.8 731.5 1135.2 730.8 1137.5 730.5 1138.8 729.8 1144.5 728.5 1146.8 727.5 1150.2 726.8 1169.2 720.5 1171.8 719.2 1174.5 718.5 1175.5 717.8 1176.2 717.8 1177.2 717.2 1186.2 713.8 1192.2 710.8 1192.8 710.8 1203.8 705.5 1204.5 704.8 1211.8 701.2 1225.5 692.5 1237.2 683.2 1237.2 682.8 1242.8 677.5 1248.5 670.5 1251.5 665.8 1254.8 658.8 1256.5 653.5 1256.5 652.2 1257.2 650.2 1257.2 647.8 1257.5 647.5 1257.5 641.2 1257.2 640.8 1257.2 638.2 1256.8 637.8 1256.5 634.8 1255.8 633.5 1255.2 630.5 1252.2 623.8 1248.2 617.5 1246.8 616.2 1245.8 614.5 1235.5 603.8 1223.8 594.8 1214.5 588.8 1209.8 586.5 1206.8 584.5 1188.2 575.5 1187.5 575.5 1184.2 573.8 1183.5 573.8 1175.8 570.5 1174.2 570.2 1171.5 568.8 1147.5 560.8 1146.5 560.8 1141.8 559.2 1139.5 558.8 1137.2 557.8 1134.8 557.5 1133.5 556.8 1132.5 556.8 1132.2 556.5 1131.2 556.5 1130.8 556.2 1129.8 556.2 1129.5 555.8 1128.5 555.8 1128.2 555.5 1127.2 555.5 1117.5 552.8 1116.2 552.8 1115.8 552.5 1111.8 551.8 1108.8 550.8 1105.8 550.5 1104.2 549.8 1102.8 549.8 1102.5 549.5 1101.2 549.5 1100.8 549.2 1099.5 549.2 1099.2 548.8 1097.8 548.8 1097.5 548.5 1096.2 548.5 1095.8 548.2 1094.5 548.2 1094.2 547.8 1092.8 547.8 1090.8 547.2 1089.2 547.2 1088.8 546.8 1087.5 546.8 1085.5 546.2 1083.8 546.2 1081.8 545.5 1080.2 545.5 1079.8 545.2 1078.2 545.2 1077.8 544.8 1076.2 544.8 1075.8 544.5 1074.2 544.5 1073.8 544.2 1072.2 544.2 1069.8 543.5 1067.8 543.5 1065.5 542.8 1063.5 542.8 1063.2 542.5 1061.2 542.5 1060.8 542.2 1054.2 541.5 1053.8 541.2 1051.8 541.2 1051.5 540.8 1049.5 540.8 1049.2 540.5 1041.2 539.8 1040.8 539.5 1032.8 538.8 1032.5 538.5 1026.5 538.2 1026.2 537.8 1023.2 537.8 1022.8 537.5 1019.5 537.5 1019.2 537.2 1015.8 537.2 1015.5 536.8 1012.2 536.8 1011.8 536.5 1008.2 536.5 1007.8 536.2 1003.8 536.2 1003.5 535.8 999.5 535.8 999.2 535.5 995.2 535.5 994.8 535.2 991.2 535.2 990.8 534.8 987.2 534.8 986.8 534.5 982.8 534.5 982.5 534.2 978.2 534.2 977.8 533.8 967.5 533.5 967.2 533.2 960.8 533.2 960.5 532.8 951.8 532.8 951.5 532.5 915.2 532.5 914.8 532.8 906.2 532.8 905.8 533.2 893.8 533.5 893.5 533.8 888.8 533.8 888.5 534.2 884.2 534.2 883.8 534.5 879.8 534.5 879.5 534.8 875.8 534.8 875.5 535.2 871.8 535.2 871.5 535.5 867.5 535.5 867.2 535.8 862.8 535.8 862.5 536.2 850.8 536.8 850.5 537.2 837.2 538.2 836.8 538.5 834.2 538.5 833.8 538.8 831.2 538.8 830.8 539.2 828.5 539.2 828.2 539.5 825.5 539.5 825.2 539.8 817.5 540.5 817.2 540.8 805.5 542.2 803.2 542.8 798.8 543.2 798.5 543.5 796.8 543.5 796.5 543.8 794.8 543.8 794.5 544.2 784.8 545.5 782.8 546.2 781.2 546.2 779.2 546.8 777.5 546.8 777.2 547.2 772.2 547.8 770.5 548.5 767.2 548.8 765.5 549.5 760.8 550.2 760.5 550.5 754.8 551.5 754.5 551.8 750.5 552.5 747.5 553.5 746.2 553.5 744.8 554.2 743.5 554.2 739.5 555.5 738.2 555.5 736.8 556.2 735.8 556.2 731.8 557.5 729.5 557.8 728.2 558.5 725.8 558.8 723.5 559.8 722.5 559.8 720.2 560.8 719.2 560.8 713.5 562.8 712.5 562.8 711.5 563.5 708.5 564.2 704.5 565.8 702.5 566.2 701.5 566.8 696.8 568.2 694.2 569.5 689.8 570.8 686.5 572.5 685.8 572.5 679.2 575.5 678.5 575.5 672.5 578.5 671.8 578.5 653.8 587.8 647.2 592.2 646.2 592.5 636.8 599.2 631.8 603.2 631.5 603.8 624.8 609.8 617.5 618.8 614.8 623.2 611.2 631.2 611.2 632.2 609.8 636.2 609.5 640.2Z" fill="url(#g_disc)"/>
<g fill="none" stroke-width="1.6"><path d="M929.1 589A4.5 1.5 0 0 0 937.5 589" stroke="#ffd46e" stroke-width="1.1"/><path d="M937.5 589A4.5 1.5 0 0 0 937.5 587.9M929.1 587.9A4.5 1.5 0 0 0 929.1 589" stroke="#ffd46e" stroke-width="1.1"/><path d="M924.9 589.7A8.9 3.1 0 0 0 941.7 589.6" stroke="#ffd879" stroke-width="1.1"/><path d="M941.7 589.6A8.9 3.1 0 0 0 941.7 587.5M924.9 587.5A8.9 3.1 0 0 0 924.9 589.7" stroke="#ffd879" stroke-width="1.1"/><path d="M920.7 590.2A13.4 4.6 0 0 0 945.9 590.1" stroke="#ffdd85" stroke-width="1.1"/><path d="M945.9 590.1A13.4 4.6 0 0 0 945.9 586.9M920.7 587A13.4 4.6 0 0 0 920.7 590.2" stroke="#ffdd85" stroke-width="1.1"/><path d="M916.6 590.5A17.9 6.1 0 0 0 950.1 590.5" stroke="#ffe190" stroke-width="1.1"/><path d="M950.1 590.5A17.9 6.1 0 0 0 950 586.2M916.5 586.2A17.9 6.1 0 0 0 916.6 590.5" stroke="#ffe190" stroke-width="1.1"/><path d="M912.4 590.7A22.3 7.6 0 0 0 954.2 590.7" stroke="#ffe59c" stroke-width="1.1"/><path d="M954.2 590.7A22.3 7.6 0 0 0 954.2 585.4M912.4 585.4A22.3 7.6 0 0 0 912.4 590.7" stroke="#ffe59c" stroke-width="1.1"/><path d="M908.3 590.8A26.7 9.1 0 0 0 958.4 590.7" stroke="#ffe9a7" stroke-width="1.1"/><path d="M958.4 590.7A26.7 9.1 0 0 0 958.3 584.4M908.2 584.4A26.7 9.1 0 0 0 908.3 590.8" stroke="#ffe9a7" stroke-width="1.1"/><path d="M904.2 590.7A31.1 10.6 0 0 0 962.5 590.6" stroke="#ffedb2" stroke-width="1.1"/><path d="M962.5 590.6A31.1 10.6 0 0 0 962.4 583.2M904.1 583.3A31.1 10.6 0 0 0 904.2 590.7" stroke="#ffedb2" stroke-width="1.1"/><path d="M900.1 590.5A35.4 12.1 0 0 0 966.5 590.5" stroke="#ffedb8" stroke-width="1.1"/><path d="M966.5 590.5A35.4 12.1 0 0 0 966.5 582M900.1 582.1A35.4 12.1 0 0 0 900.1 590.5" stroke="#ffedb8" stroke-width="1.1"/><path d="M896.1 590.3A39.7 13.6 0 0 0 970.6 590.2" stroke="#ffecbd" stroke-width="1.1"/><path d="M970.6 590.2A39.7 13.6 0 0 0 970.5 580.8M896 580.8A39.7 13.6 0 0 0 896.1 590.3" stroke="#ffecbd" stroke-width="1.1"/><path d="M892.1 589.9A44 15 0 0 0 974.5 589.9" stroke="#ffebc2" stroke-width="1.1"/><path d="M974.5 589.9A44 15 0 0 0 974.5 579.4M892.1 579.5A44 15 0 0 0 892.1 589.9" stroke="#ffebc2" stroke-width="1.1"/><path d="M888.2 589.6A48.2 16.5 0 0 0 978.5 589.5" stroke="#ffebc7" stroke-width="1.1"/><path d="M978.5 589.5A48.2 16.5 0 0 0 978.4 578M888.1 578.1A48.2 16.5 0 0 0 888.2 589.6" stroke="#ffebc7" stroke-width="1.1"/><path d="M884.2 589.2A52.4 17.9 0 0 0 982.4 589.1" stroke="#ffe7c8" stroke-width="1.1"/><path d="M982.4 589.1A52.4 17.9 0 0 0 982.4 576.6M884.2 576.7A52.4 17.9 0 0 0 884.2 589.2" stroke="#ffe7c8" stroke-width="1.1"/><path d="M880.3 588.8A56.5 19.3 0 0 0 986.4 588.7" stroke="#ffe3c9" stroke-width="1.1"/><path d="M986.4 588.7A56.5 19.3 0 0 0 986.3 575.2M880.2 575.3A56.5 19.3 0 0 0 880.3 588.8" stroke="#ffe3c9" stroke-width="1.1"/><path d="M876.4 588.4A60.7 20.8 0 0 0 990.3 588.3" stroke="#ffdfcb" stroke-width="1.1"/><path d="M990.3 588.3A60.7 20.8 0 0 0 990.2 573.8M876.3 573.9A60.7 20.8 0 0 0 876.4 588.4" stroke="#ffdfcb" stroke-width="1.1"/><path d="M872.5 588A64.9 22.2 0 0 0 994.2 587.9" stroke="#ffdbcc" stroke-width="1.1"/><path d="M994.2 587.9A64.9 22.2 0 0 0 994.1 572.4M872.4 572.5A64.9 22.2 0 0 0 872.5 588" stroke="#ffdbcc" stroke-width="1.1"/><path d="M868.6 587.7A69.1 23.6 0 0 0 998.1 587.6" stroke="#ffd7cd" stroke-width="1.14"/><path d="M998.1 587.6A69.1 23.6 0 0 0 998 571.1M868.5 571.2A69.1 23.6 0 0 0 868.6 587.7" stroke="#ffd7cd" stroke-width="1.14"/><path d="M864.6 587.4A73.3 25.1 0 0 0 1002.1 587.3" stroke="#ffd4cf" stroke-width="1.18"/><path d="M1002.1 587.3A73.3 25.1 0 0 0 1002 569.8M864.5 569.9A73.3 25.1 0 0 0 864.6 587.4" stroke="#ffd4cf" stroke-width="1.18"/><path d="M860.6 587.3A77.6 26.5 0 0 0 1006.1 587.1" stroke="#ffd0d0" stroke-width="1.23"/><path d="M1006.1 587.1A77.6 26.5 0 0 0 1006 568.7M860.5 568.8A77.6 26.5 0 0 0 860.6 587.3" stroke="#ffd0d0" stroke-width="1.23"/><path d="M856.5 587.2A82 28 0 0 0 1010.2 587.1" stroke="#ffccd1" stroke-width="1.27"/><path d="M1010.2 587.1A82 28 0 0 0 1010.1 567.6M856.4 567.7A82 28 0 0 0 856.5 587.2" stroke="#ffccd1" stroke-width="1.27"/><path d="M852.3 587.3A86.5 29.6 0 0 0 1014.5 587.2" stroke="#fec5d0" stroke-width="1.31"/><path d="M1014.5 587.2A86.5 29.6 0 0 0 1014.3 566.6M852.1 566.7A86.5 29.6 0 0 0 852.3 587.3" stroke="#fec5d0" stroke-width="1.31"/><path d="M847.9 587.6A91.2 31.2 0 0 0 1018.8 587.5" stroke="#fcbed0" stroke-width="1.35"/><path d="M1018.8 587.5A91.2 31.2 0 0 0 1018.7 565.8M847.8 565.9A91.2 31.2 0 0 0 847.9 587.6" stroke="#fcbed0" stroke-width="1.35"/><path d="M843.4 588.1A96 32.8 0 0 0 1023.3 587.9" stroke="#fbb7cf" stroke-width="1.39"/><path d="M1023.3 587.9A96 32.8 0 0 0 1023.2 565.1M843.3 565.2A96 32.8 0 0 0 843.4 588.1" stroke="#fbb7cf" stroke-width="1.35"/><path d="M838.7 588.7A101 34.5 0 0 0 1028.1 588.6" stroke="#fab0cf" stroke-width="1.43"/><path d="M1028.1 588.6A101 34.5 0 0 0 1027.9 564.6M838.5 564.7A101 34.5 0 0 0 838.7 588.7" stroke="#fab0cf" stroke-width="1.35"/><path d="M833.7 589.7A106.3 36.4 0 0 0 1033 589.5" stroke="#f9a9ce" stroke-width="1.47"/><path d="M1033 589.5A106.3 36.4 0 0 0 1032.9 564.2M833.6 564.3A106.3 36.4 0 0 0 833.7 589.7" stroke="#f9a9ce" stroke-width="1.35"/><path d="M828.5 590.8A111.9 38.3 0 0 0 1038.2 590.7" stroke="#f7a2cd" stroke-width="1.52"/><path d="M1038.2 590.7A111.9 38.3 0 0 0 1038.1 564M828.4 564.2A111.9 38.3 0 0 0 828.5 590.8" stroke="#f7a2cd" stroke-width="1.35"/><path d="M823 592.3A117.7 40.3 0 0 0 1043.8 592.1" stroke="#f69bcd" stroke-width="1.56"/><path d="M1043.8 592.1A117.7 40.3 0 0 0 1043.6 564.1M822.8 564.2A117.7 40.3 0 0 0 823 592.3" stroke="#f69bcd" stroke-width="1.35"/><path d="M817.1 594.1A124 42.4 0 0 0 1049.7 593.9" stroke="#f594cc" stroke-width="1.6"/><path d="M1049.7 593.9A124 42.4 0 0 0 1049.5 564.3M816.9 564.5A124 42.4 0 0 0 817.1 594.1" stroke="#f594cc" stroke-width="1.35"/><path d="M810.9 596.1A130.7 44.7 0 0 0 1055.9 596" stroke="#f28bce" stroke-width="1.6"/><path d="M1055.9 596A130.7 44.7 0 0 0 1055.7 564.8M810.7 565A130.7 44.7 0 0 0 810.9 596.1" stroke="#f28bce" stroke-width="1.35"/><path d="M804.1 598.6A137.9 47.2 0 0 0 1062.7 598.4" stroke="#f082cf" stroke-width="1.6"/><path d="M1062.7 598.4A137.9 47.2 0 0 0 1062.5 565.6M803.9 565.8A137.9 47.2 0 0 0 804.1 598.6" stroke="#f082cf" stroke-width="1.35"/><path d="M796.9 601.4A145.6 49.8 0 0 0 1069.9 601.2" stroke="#ee7ad1" stroke-width="1.6"/><path d="M1069.9 601.2A145.6 49.8 0 0 0 1069.7 566.6M796.7 566.8A145.6 49.8 0 0 0 796.9 601.4" stroke="#ee7ad1" stroke-width="1.35"/><path d="M789.2 604.7A153.9 52.6 0 0 0 1077.7 604.5" stroke="#eb71d2" stroke-width="1.6"/><path d="M1077.7 604.5A153.9 52.6 0 0 0 1077.4 567.8M788.9 568A153.9 52.6 0 0 0 789.2 604.7" stroke="#eb71d2" stroke-width="1.35"/><path d="M780.8 608.3A162.8 55.7 0 0 0 1086 608.1" stroke="#e968d4" stroke-width="1.6"/><path d="M1086 608.1A162.8 55.7 0 0 0 1085.8 569.3M780.6 569.6A162.8 55.7 0 0 0 780.8 608.3" stroke="#e968d4" stroke-width="1.35"/><path d="M771.8 612.4A172.5 59 0 0 0 1095.1 612.2" stroke="#e65fd6" stroke-width="1.6"/><path d="M1095.1 612.2A172.5 59 0 0 0 1094.8 571.1M771.5 571.4A172.5 59 0 0 0 771.8 612.4" stroke="#e65fd6" stroke-width="1.35"/><path d="M762 617A182.9 62.6 0 0 0 1104.9 616.8" stroke="#e456d8" stroke-width="1.6"/><path d="M1104.9 616.8A182.9 62.6 0 0 0 1104.6 573.2M761.7 573.5A182.9 62.6 0 0 0 762 617" stroke="#e456d8" stroke-width="1.35"/><path d="M751.4 622.1A194.2 66.4 0 0 0 1115.5 621.8" stroke="#e14cdb" stroke-width="1.6"/><path d="M1115.5 621.8A194.2 66.4 0 0 0 1115.2 575.6M751.1 575.9A194.2 66.4 0 0 0 751.4 622.1" stroke="#e14cdb" stroke-width="1.35"/><path d="M740 627.7A206.4 70.6 0 0 0 1126.9 627.4" stroke="#de43dd" stroke-width="1.6"/><path d="M1126.9 627.4A206.4 70.6 0 0 0 1126.6 578.3M739.7 578.5A206.4 70.6 0 0 0 740 627.7" stroke="#de43dd" stroke-width="1.35"/><path d="M727.7 633.8A219.5 75.1 0 0 0 1139.3 633.5" stroke="#dc39e0" stroke-width="1.6"/><path d="M1139.3 633.5A219.5 75.1 0 0 0 1138.9 581.2M727.3 581.5A219.5 75.1 0 0 0 727.7 633.8" stroke="#dc39e0" stroke-width="1.35"/><path d="M714.3 640.5A233.8 80 0 0 0 1152.6 640.2" stroke="#d930e3" stroke-width="1.6"/><path d="M1152.6 640.2A233.8 80 0 0 0 1152.3 584.5M714 584.8A233.8 80 0 0 0 714.3 640.5" stroke="#d930e3" stroke-width="1.35"/><path d="M699.9 647.8A249.2 85.2 0 0 0 1167.1 647.4" stroke="#d626e6" stroke-width="1.6"/><path d="M1167.1 647.4A249.2 85.2 0 0 0 1166.7 588.1M699.5 588.4A249.2 85.2 0 0 0 699.9 647.8" stroke="#d626e6" stroke-width="1.35"/><path d="M684.3 655.7A265.9 90.9 0 0 0 1182.7 655.3" stroke="#d41fe7" stroke-width="1.6"/><path d="M1182.7 655.3A265.9 90.9 0 0 0 1182.3 592M683.9 592.3A265.9 90.9 0 0 0 684.3 655.7" stroke="#d41fe7" stroke-width="1.35"/><path d="M667.4 664.1A283.9 97.1 0 0 0 1199.6 663.7" stroke="#d118e8" stroke-width="1.6"/><path d="M1199.6 663.7A283.9 97.1 0 0 0 1199.2 596.1M667 596.5A283.9 97.1 0 0 0 667.4 664.1" stroke="#d118e8" stroke-width="1.35"/><path d="M649.2 673.3A303.3 103.7 0 0 0 1217.8 672.8" stroke="#cf11e9" stroke-width="1.6"/><path d="M1217.8 672.8A303.3 103.7 0 0 0 1217.4 600.6M648.8 601A303.3 103.7 0 0 0 649.2 673.3" stroke="#cf11e9" stroke-width="1.35"/><path d="M629.7 683.1A324.2 110.9 0 0 0 1237.4 682.6" stroke="#cc0aeb" stroke-width="1.6"/><path d="M1237.4 682.6A324.2 110.9 0 0 0 1236.9 605.4M629.2 605.9A324.2 110.9 0 0 0 629.7 683.1" stroke="#cc0aeb" stroke-width="1.35"/></g>
<g fill="none"><path d="M933.3 588.1 939.8 588.5 946.6 588.6 953.8 588.2 961.2 587.4 974.7 585.2 1004.8 578.9 1012.9 577.7 1020.5 576.9 1029 576.6 1037.6 576.8 1046.7 577.6 1056.3 579 1068.3 581.4 1081.8 584.8 1097.1 589.1 1115 594.7 1152.4 607.4 1257.5 644.2" stroke="#ffeb57" stroke-width="0.90"/><path d="M933.3 588.1 939.8 588.4 946.6 588.2 953.7 587.6 961.1 586.7 974.6 584.1 1004.6 577 1012.7 575.6 1020.2 574.6 1028.7 574 1037.3 574 1046.3 574.6 1055.9 575.7 1067.9 577.8 1081.4 580.8 1096.5 584.7 1114.4 589.8 1151.7 601.5 1256.5 635.5" stroke="#ffec5e" stroke-width="0.88"/><path d="M933.3 588.1 939.7 588.2 946.4 587.8 953.5 587.1 960.8 585.9 974.2 583 1003.9 575.1 1011.9 573.4 1019.4 572.3 1027.9 571.5 1036.3 571.2 1045.3 571.5 1054.8 572.4 1066.6 574.2 1080 576.8 1095 580.3 1112.7 585 1149.7 595.6 1253.5 626.9" stroke="#ffed66" stroke-width="0.86"/><path d="M933.3 588.1 939.6 588 946.2 587.5 953.2 586.6 960.4 585.2 973.6 581.9 1002.8 573.2 1010.7 571.3 1018 570 1026.4 568.9 1034.7 568.5 1043.6 568.6 1052.9 569.2 1064.6 570.6 1077.7 572.9 1092.5 576 1109.9 580.2 1146.3 589.9 1248.5 618.3" stroke="#ffee6d" stroke-width="0.84"/><path d="M933.3 588.1 939.5 587.8 946 587.2 952.8 586 959.8 584.5 972.7 580.8 1001.3 571.4 1009 569.3 1016.2 567.7 1024.4 566.5 1032.5 565.8 1041.1 565.6 1050.3 566 1061.7 567.2 1074.6 569.1 1089 571.8 1106.1 575.5 1141.7 584.2 1241.6 610" stroke="#ffef74" stroke-width="0.82"/><path d="M933.3 588.1 939.3 587.7 945.6 586.8 952.2 585.5 959.1 583.8 971.5 579.8 999.3 569.6 1006.9 567.3 1013.8 565.5 1021.8 564 1029.7 563.1 1038.1 562.8 1047 562.9 1058 563.8 1070.5 565.3 1084.6 567.7 1101.1 570.9 1135.7 578.7 1232.8 601.8" stroke="#fff07b" stroke-width="0.80"/><path d="M933.3 588.1 939.1 587.5 945.2 586.5 951.5 585 958.1 583.1 970.2 578.8 997 567.8 1004.2 565.3 1011 563.4 1018.6 561.7 1026.3 560.6 1034.3 560 1042.9 559.9 1053.6 560.5 1065.7 561.7 1079.2 563.7 1095.2 566.5 1128.5 573.4 1222.1 593.9" stroke="#fff182" stroke-width="0.79"/><path d="M933.3 588.1 938.8 587.4 944.6 586.2 950.7 584.5 957.1 582.4 968.6 577.8 994.2 566.2 1001.2 563.5 1007.6 561.3 1014.9 559.5 1022.3 558.2 1030 557.3 1038.2 557 1048.4 557.3 1060 558.2 1072.9 559.8 1088.2 562.3 1120.1 568.2 1209.7 586.3" stroke="#fff289" stroke-width="0.77"/><path d="M933.3 588.1 938.5 587.2 944.1 585.9 949.9 584.1 955.9 581.8 966.8 576.9 991.1 564.6 997.7 561.7 1003.8 559.4 1010.8 557.3 1017.7 555.8 1025 554.8 1032.8 554.3 1042.5 554.3 1053.5 554.9 1065.8 556.2 1080.3 558.2 1110.6 563.3 1195.6 579.1" stroke="#fff18f" stroke-width="0.75"/><path d="M933.3 588.1 938.2 587.1 943.4 585.6 948.9 583.6 954.5 581.2 964.8 576 987.7 563.1 993.8 560 999.6 557.6 1006.1 555.3 1012.6 553.6 1019.5 552.4 1026.8 551.7 1036 551.4 1046.3 551.8 1057.8 552.7 1071.4 554.4 1099.9 558.7 1179.8 572.2" stroke="#ffef94" stroke-width="0.74"/><path d="M933.3 588.1 937.9 587 942.7 585.3 947.8 583.2 953 580.7 962.6 575.2 983.8 561.7 989.6 558.4 994.9 555.8 1001 553.4 1007.1 551.6 1013.5 550.2 1020.3 549.3 1028.8 548.8 1038.3 548.9 1049.1 549.5 1061.8 550.8 1088.2 554.4 1162.5 565.8" stroke="#ffed99" stroke-width="0.72"/><path d="M933.3 588.1 937.5 586.8 941.9 585.1 946.6 582.9 951.4 580.2 960.2 574.4 979.7 560.4 985 557 989.9 554.3 995.5 551.7 1001.1 549.7 1006.9 548.1 1013.2 547 1021 546.3 1029.8 546.1 1039.6 546.5 1051.3 547.5 1075.6 550.4 1143.8 559.9" stroke="#ffeb9e" stroke-width="0.71"/><path d="M933.3 588.1 937.1 586.7 941.1 584.9 945.3 582.5 949.7 579.7 957.6 573.7 975.3 559.2 980.1 555.7 984.5 552.8 989.6 550.1 994.6 547.9 999.9 546.2 1005.6 545 1012.6 544.1 1020.6 543.7 1029.5 543.8 1040.1 544.5 1062.1 546.7 1123.8 554.5" stroke="#ffe9a3" stroke-width="0.70"/><path d="M933.3 588.1 936.7 586.6 940.3 584.7 944 582.2 947.9 579.3 954.9 573.1 970.6 558.1 974.9 554.5 978.8 551.5 983.3 548.7 987.8 546.4 992.5 544.5 997.6 543.1 1003.8 542.1 1010.9 541.5 1018.9 541.4 1028.2 541.7 1047.8 543.5 1102.7 549.7" stroke="#ffe8a8" stroke-width="0.69"/><path d="M933.3 588.1 936.2 586.6 939.3 584.5 942.6 581.9 946 578.9 952.1 572.6 965.8 557.2 969.4 553.4 972.9 550.4 976.8 547.4 980.7 545 984.8 543.1 989.1 541.5 994.6 540.3 1000.7 539.5 1007.6 539.2 1015.8 539.4 1032.8 540.6 1080.5 545.4" stroke="#ffe6ad" stroke-width="0.68"/><path d="M933.3 588.1 935.8 586.5 938.4 584.4 941.1 581.7 944 578.6 949.1 572.1 960.7 556.4 963.8 552.5 966.7 549.4 969.9 546.3 973.2 543.8 976.7 541.8 980.4 540.2 985 538.8 990.1 537.8 996 537.4 1002.8 537.3 1017.1 538.1 1057.4 541.8" stroke="#ffe4b2" stroke-width="0.67"/><path d="M933.3 588.1 935.3 586.4 937.4 584.2 942 578.2 946.1 571.7 955.1 556.1 959.4 549.7 963.6 544.6 965.8 542.6 968 540.9 971.2 539.1 974.6 537.7 978.4 536.6 982.6 536 987.3 535.7 992.7 535.7 1008 536.7M1009.7 536.8 1011.8 537M1015 537.3 1015.4 537.3M1026.8 538.3 1027.3 538.3M1030.7 538.6 1031.8 538.7" stroke="#ffe2b7" stroke-width="0.66"/><path d="M933.3 588.1 934.8 586.3 936.4 584.1 939.9 578 943 571.3 949.7 555.7 952.9 549.3 955.9 544.4 959 540.6 961.3 538.6 963.8 537 966.5 535.8 969.5 535 972.7 534.5 976.6 534.3 986.7 534.7" stroke="#ffe0bc" stroke-width="0.66"/><path d="M933.3 588.1 935.4 584 937.7 577.9 944.3 555.5 946.3 549.1 948.3 544.3 950.2 540.6 951.7 538.5 953.2 536.8 954.9 535.5 956.7 534.5 958.8 533.8 961.1 533.4 963.8 533.2 967.1 533.3" stroke="#ffdec0" stroke-width="0.65"/><path d="M933.3 588.1 934.4 584 935.5 577.8 939.8 548.8 940.8 544 941.8 540.2 943.3 536.4 944.1 535.1 945.1 534 946.1 533.3 947.3 532.8 948.6 532.6 950.3 532.6" stroke="#ffdcc5" stroke-width="0.65"/><path d="M933.3 588.1 933.3 532.4" stroke="#ffd5c8" stroke-width="0.65"/><path d="M933.3 588.1 932.2 584 931.1 577.8 926.8 548.8 925.8 544 924.8 540.2 923.3 536.4 922.5 535.1 921.5 534 920.5 533.3 919.3 532.8 918 532.6 916.3 532.7" stroke="#ffcdcb" stroke-width="0.65"/><path d="M933.3 588.1 931.2 584 928.9 577.9 922.3 555.5 920.3 549.1 918.3 544.3 916.4 540.6 914.9 538.5 913.4 536.8 911.7 535.5 909.9 534.5 907.8 533.8 905.5 533.4 902.8 533.2 899.5 533.3" stroke="#ffc5cd" stroke-width="0.65"/><path d="M933.3 588.1 931.8 586.3 930.2 584.1 926.7 578 923.6 571.3 916.9 555.7 913.7 549.3 910.7 544.4 907.6 540.6 905.3 538.6 902.8 537 900.1 535.8 897.1 535 893.9 534.5 890 534.3 879.9 534.7" stroke="#ffbccf" stroke-width="0.66"/><path d="M933.3 588.1 931.3 586.4 929.2 584.2 924.6 578.2 920.5 571.7 911.5 556.1 907.2 549.7 903 544.6 900.8 542.6 898.6 540.9 895.4 539.1 892 537.7 888.2 536.6 884 536 879.3 535.7 873.9 535.7 858.6 536.7M857 536.8 854.8 537M851.6 537.3 851.2 537.3M847.6 537.6 847.3 537.7M840 538.3 839.3 538.3M835.9 538.6 834.8 538.7" stroke="#ffb4d2" stroke-width="0.66"/><path d="M933.3 588.1 930.8 586.5 928.2 584.4 925.5 581.7 922.6 578.6 917.5 572.1 905.9 556.4 902.8 552.5 899.9 549.4 896.7 546.3 893.4 543.8 889.9 541.8 886.2 540.2 881.6 538.8 876.5 537.8 870.6 537.4 863.8 537.3 849.5 538.1 809.2 541.8" stroke="#ffabd4" stroke-width="0.67"/><path d="M933.3 588.1 930.4 586.6 927.3 584.5 924 581.9 920.6 578.9 914.5 572.6 900.8 557.2 897.2 553.4 893.7 550.4 889.8 547.4 885.9 545 881.8 543.1 877.5 541.5 872 540.3 865.9 539.5 859 539.2 850.8 539.4 833.8 540.6 786.1 545.4" stroke="#ffa3d6" stroke-width="0.68"/><path d="M933.3 588.1 929.9 586.6 926.3 584.7 922.6 582.2 918.7 579.3 911.7 573.1 896 558.1 891.7 554.5 887.8 551.5 883.3 548.7 878.8 546.4 874.1 544.5 869 543.1 862.8 542.1 855.7 541.5 847.7 541.4 838.4 541.7 818.8 543.5 763.9 549.7" stroke="#ff9bd8" stroke-width="0.69"/><path d="M933.3 588.1 929.5 586.7 925.5 584.9 921.3 582.5 916.9 579.7 909 573.7 891.3 559.2 886.5 555.7 882.1 552.8 877 550.1 872 547.9 866.7 546.2 861 545 854 544.1 846 543.7 837.1 543.8 826.5 544.5 804.5 546.7 742.8 554.5" stroke="#fd8fda" stroke-width="0.70"/><path d="M933.3 588.1 929.1 586.8 924.7 585.1 920 582.9 915.2 580.2 906.4 574.4 886.9 560.4 881.6 557 876.7 554.3 871.1 551.7 865.5 549.7 859.7 548.1 853.4 547 845.6 546.3 836.8 546.1 827 546.5 815.3 547.5 791 550.4 722.8 559.9" stroke="#fa82dc" stroke-width="0.71"/><path d="M933.3 588.1 928.7 587 923.9 585.3 918.8 583.2 913.6 580.7 904 575.2 882.8 561.7 877 558.4 871.7 555.8 865.6 553.4 859.5 551.6 853.1 550.2 846.3 549.3 837.8 548.8 828.3 548.9 817.5 549.5 804.8 550.8 778.4 554.4 704.1 565.8" stroke="#f875dd" stroke-width="0.72"/><path d="M933.3 588.1 928.4 587.1 923.2 585.6 917.7 583.6 912.1 581.2 901.8 576 878.9 563.1 872.8 560 867 557.6 860.5 555.3 854 553.6 847.1 552.4 839.8 551.7 830.6 551.4 820.3 551.8 808.8 552.7 795.2 554.4 766.7 558.7 686.8 572.2" stroke="#f568df" stroke-width="0.74"/><path d="M933.3 588.1 928.1 587.2 922.5 585.9 916.7 584.1 910.7 581.8 899.8 576.9 875.5 564.6 868.9 561.7 862.8 559.4 855.8 557.3 848.9 555.8 841.6 554.8 833.8 554.3 824.1 554.3 813.1 554.9 800.8 556.2 786.3 558.2 756 563.3 671 579.1" stroke="#f35be0" stroke-width="0.75"/><path d="M933.3 588.1 927.8 587.4 922 586.2 915.9 584.5 909.5 582.4 898 577.8 872.4 566.2 865.4 563.5 859 561.3 851.7 559.5 844.3 558.2 836.6 557.3 828.4 557 818.2 557.3 806.6 558.2 793.7 559.8 778.4 562.3 746.5 568.2 656.9 586.3" stroke="#f04ee2" stroke-width="0.77"/><path d="M933.3 588.1 927.5 587.5 921.4 586.5 915.1 585 908.5 583.1 896.4 578.8 869.6 567.8 862.4 565.3 855.6 563.4 848 561.7 840.3 560.6 832.3 560 823.7 559.9 813 560.5 800.9 561.7 787.4 563.7 771.4 566.5 738.1 573.4 644.5 593.9" stroke="#ed41e4" stroke-width="0.79"/><path d="M933.3 588.1 927.3 587.7 921 586.8 914.4 585.5 907.5 583.8 895.1 579.8 867.3 569.6 859.7 567.3 852.8 565.5 844.8 564 836.9 563.1 828.5 562.8 819.6 562.9 808.6 563.8 796.1 565.3 782 567.7 765.5 570.9 730.9 578.7 633.8 601.8" stroke="#eb34e5" stroke-width="0.80"/><path d="M933.3 588.1 927.1 587.8 920.6 587.2 913.8 586 906.8 584.5 893.9 580.8 865.3 571.4 857.6 569.3 850.4 567.7 842.2 566.5 834.1 565.8 825.5 565.6 816.3 566 804.9 567.2 792 569.1 777.6 571.8 760.5 575.5 724.9 584.2 625 610" stroke="#e82de6" stroke-width="0.82"/><path d="M933.3 588.1 927 588 920.4 587.5 913.4 586.6 906.2 585.2 893 581.9 863.8 573.2 855.9 571.3 848.6 570 840.2 568.9 831.9 568.5 823 568.6 813.7 569.2 802 570.6 788.9 572.9 774.1 576 756.7 580.2 720.3 589.9 618.1 618.3" stroke="#e427e7" stroke-width="0.84"/><path d="M933.3 588.1 926.9 588.2 920.2 587.8 913.1 587.1 905.8 585.9 892.4 583 862.7 575.1 854.7 573.4 847.2 572.3 838.7 571.5 830.3 571.2 821.3 571.5 811.8 572.4 800 574.2 786.6 576.8 771.6 580.3 753.9 585 716.9 595.6 613.1 626.9" stroke="#e120e7" stroke-width="0.86"/><path d="M933.3 588.1 926.8 588.4 920 588.2 912.9 587.6 905.5 586.7 892 584.1 862 577 853.9 575.6 846.4 574.6 837.9 574 829.3 574 820.3 574.6 810.7 575.7 798.7 577.8 785.2 580.8 770.1 584.7 752.2 589.8 714.9 601.5 610.1 635.5" stroke="#de1ae8" stroke-width="0.88"/><path d="M933.3 588.1 926.8 588.5 920 588.6 912.8 588.2 905.4 587.4 891.9 585.2 861.8 578.9 853.7 577.7 846.1 576.9 837.6 576.6 829 576.8 819.9 577.6 810.3 579 798.3 581.4 784.8 584.8 769.5 589.1 751.6 594.7 714.2 607.4 609.1 644.2" stroke="#db13e9" stroke-width="0.90"/><path d="M933.3 588.1 926.8 588.7 920 588.9 912.9 588.7 905.5 588.2 892 586.3 862 580.9 853.9 579.8 846.4 579.3 837.9 579.1 829.3 579.6 820.3 580.7 810.7 582.3 798.7 585 785.2 588.8 770.1 593.5 752.2 599.6 714.9 613.3 610.1 652.9" stroke="#d80de9" stroke-width="0.95"/><path d="M933.3 588.1 926.9 588.9 920.2 589.3 913.1 589.3 905.8 588.9 892.4 587.4 862.7 582.8 854.7 581.9 847.2 581.6 838.7 581.7 830.3 582.4 821.3 583.7 811.8 585.6 800 588.6 786.6 592.7 771.6 597.9 753.9 604.4 716.9 619.1 613.1 661.6" stroke="#d406ea" stroke-width="0.99"/><path d="M933.3 588.1 927 589 920.4 589.6 913.4 589.8 906.2 589.6 893 588.5 863.8 584.6 855.9 584 848.6 583.9 840.2 584.2 831.9 585.1 823 586.7 813.7 588.8 802 592.2 788.9 596.6 774.1 602.2 756.7 609.2 720.3 624.9 618.1 670.1" stroke="#d100eb" stroke-width="1.04"/><path d="M933.3 588.1 927.1 589.2 920.6 590 913.8 590.3 906.8 590.4 893.9 589.6 865.3 586.5 857.6 586.1 850.4 586.1 842.2 586.7 834.1 587.8 825.5 589.6 816.3 592 804.9 595.7 792 600.5 777.6 606.4 760.5 613.9 724.9 630.5 625 678.5" stroke="#bf0000" stroke-width="1.09"/><path d="M933.3 588.1 927.3 589.4 921 590.3 914.4 590.9 907.5 591.1 895.1 590.6 867.3 588.3 859.7 588.1 852.8 588.3 844.8 589.1 836.9 590.5 828.5 592.5 819.6 595.1 808.6 599.1 796.1 604.2 782 610.5 765.5 618.5 730.9 636 633.8 686.7" stroke="#c10802" stroke-width="1.13"/><path d="M933.3 588.1 927.5 589.5 921.4 590.6 915.1 591.4 908.5 591.7 896.4 591.6 869.6 590 862.4 590.1 855.6 590.5 848 591.4 840.3 593 832.3 595.2 823.7 598.1 813 602.4 800.9 607.8 787.4 614.5 771.4 622.9 738.1 641.4 644.5 694.6" stroke="#c21003" stroke-width="1.17"/><path d="M933.3 588.1 927.8 589.7 922 590.9 915.9 591.8 909.5 592.4 898 592.6 872.4 591.7 865.4 591.9 859 592.5 851.7 593.7 844.3 595.4 836.6 597.9 828.4 601 818.2 605.5 806.6 611.3 793.7 618.4 778.4 627.2 746.5 646.5 656.9 702.2" stroke="#c41805" stroke-width="1.21"/><path d="M933.3 588.1 928.1 589.8 922.5 591.2 916.7 592.3 910.7 593 899.8 593.5 875.5 593.3 868.9 593.7 862.8 594.4 855.8 595.8 848.9 597.8 841.6 600.4 833.8 603.8 824.1 608.6 813.1 614.6 800.8 622 786.3 631.2 756 651.4 671 709.4" stroke="#c62006" stroke-width="1.25"/><path d="M933.3 588.1 928.4 590 923.2 591.5 917.7 592.7 912.1 593.6 901.8 594.4 878.9 594.8 872.8 595.4 867 596.3 860.5 597.8 854 600 847.1 602.8 839.8 606.3 830.6 611.4 820.3 617.8 808.8 625.5 795.2 635.1 766.7 656 686.8 716.2" stroke="#c72808" stroke-width="1.29"/><path d="M933.3 588.1 928.7 590.1 923.9 591.8 918.8 593.1 913.6 594.2 904 595.2 882.8 596.2 877 596.9 871.7 598 865.6 599.7 859.5 602 853.1 605 846.3 608.8 837.8 614.1 828.3 620.7 817.5 628.7 804.8 638.7 778.4 660.4 704.1 722.6" stroke="#c9300a" stroke-width="1.32"/><path d="M933.3 588.1 929.1 590.2 924.7 592 920 593.5 915.2 594.7 906.4 596 886.9 597.5 881.6 598.4 876.7 599.6 871.1 601.5 865.5 603.9 859.7 607.1 853.4 611 845.6 616.5 836.8 623.4 827 631.7 815.3 642 791 664.4 722.8 728.5" stroke="#cb380b" stroke-width="1.36"/><path d="M933.3 588.1 929.5 590.3 925.5 592.2 921.3 593.8 916.9 595.1 909 596.6 891.3 598.7 886.5 599.7 882.1 601 877 603.1 872 605.7 866.7 609 861 613.1 854 618.8 846 625.9 837.1 634.4 826.5 645 804.5 668 742.8 733.9" stroke="#cc410d" stroke-width="1.39"/><path d="M933.3 588.1 929.9 590.4 926.3 592.4 922.6 594.2 918.7 595.5 911.7 597.3 896 599.8 891.7 600.9 887.8 602.3 883.3 604.5 878.8 607.2 874.1 610.7 869 614.9 862.8 620.8 855.7 628.1 847.7 636.9 838.4 647.7 818.8 671.3 763.9 738.8" stroke="#d14b11" stroke-width="1.41"/><path d="M933.3 588.1 930.4 590.5 927.3 592.6 924 594.4 920.6 595.9 914.5 597.8 900.8 600.7 897.2 602 893.7 603.5 889.8 605.8 885.9 608.6 881.8 612.2 877.5 616.5 872 622.6 865.9 630 859 639 850.8 650.1 833.8 674.1 786.1 743" stroke="#d65614" stroke-width="1.43"/><path d="M933.3 588.1 930.8 590.6 928.2 592.8 925.5 594.6 922.6 596.2 917.5 598.3 905.9 601.5 902.8 602.8 899.9 604.5 896.7 606.8 893.4 609.8 889.9 613.4 886.2 617.9 881.6 624.1 876.5 631.7 870.6 640.8 863.8 652.1 849.5 676.6 809.2 746.7" stroke="#db6118" stroke-width="1.45"/><path d="M933.3 588.1 931.3 590.6 929.2 592.9 927 594.8 924.7 596.5 920.5 598.7 911.2 602.2 908.7 603.6 906.4 605.3 903.7 607.7 901.1 610.7 898.3 614.5 895.3 619 891.6 625.3 887.4 633.1 877.2 653.8 865.6 678.6 833.1 749.7" stroke="#e06b1b" stroke-width="1.47"/><path d="M933.3 588.1 930.2 593 928.5 595 926.8 596.7 923.6 599 916.6 602.7 914.7 604.2 913 605.9 910.9 608.4 908.9 611.5 906.8 615.3 904.6 619.9 898.6 634.2 890.9 655.1 857.6 752" stroke="#e5761f" stroke-width="1.48"/><path d="M933.3 588.1 931.2 593.1 928.9 596.8 926.8 599.2 922.1 603.1 920.8 604.6 919.7 606.4 918.3 608.9 917 612 914.1 620.6 910.1 635 904.9 656.1 882.6 753.7" stroke="#ea8122" stroke-width="1.49"/><path d="M933.3 588.1 932.3 593.1 931.1 596.9 930.1 599.3 927.7 603.3 926.5 606.6 925.1 612.4 923.6 621 921.6 635.4 919 656.7 907.9 754.8" stroke="#ee8b26" stroke-width="1.50"/><path d="M933.3 588.1 933.3 755.1" stroke="#f29529" stroke-width="1.50"/><path d="M933.3 588.1 934.3 593.1 935.5 596.9 936.5 599.3 938.9 603.3 940.1 606.6 941.5 612.4 943 621 945 635.4 947.6 656.7 958.7 754.8" stroke="#f39a2a" stroke-width="1.50"/><path d="M933.3 588.1 935.4 593.1 937.7 596.8 939.8 599.2 944.5 603.1 945.8 604.6 946.9 606.4 948.3 608.9 949.6 612 952.5 620.6 956.5 635 961.7 656.1 984 753.7" stroke="#f4a02a" stroke-width="1.49"/><path d="M933.3 588.1 936.4 593 938.1 595 939.8 596.7 943 599 950 602.7 951.9 604.2 953.6 605.9 955.7 608.4 957.7 611.5 959.8 615.3 962 619.9 968 634.2 975.7 655.1 1009 752" stroke="#f5a52b" stroke-width="1.48"/><path d="M933.3 588.1 935.3 590.6 937.4 592.9 939.6 594.8 941.9 596.5 946.1 598.7 955.4 602.2 957.9 603.6 960.2 605.3 962.9 607.7 965.5 610.7 968.3 614.5 971.3 619 975 625.3 979.2 633.1 989.4 653.8 1001 678.6 1033.5 749.7" stroke="#f6ab2c" stroke-width="1.47"/><path d="M933.3 588.1 935.8 590.6 938.4 592.8 941.1 594.6 944 596.2 949.1 598.3 960.7 601.5 963.8 602.8 966.7 604.5 969.9 606.8 973.2 609.8 976.7 613.4 980.4 617.9 985 624.1 990.1 631.7 996 640.8 1002.8 652.1 1017.1 676.6 1057.4 746.7" stroke="#f7b02c" stroke-width="1.45"/><path d="M933.3 588.1 936.2 590.5 939.3 592.6 942.6 594.4 946 595.9 952.1 597.8 965.8 600.7 969.4 602 972.9 603.5 976.8 605.8 980.7 608.6 984.8 612.2 989.1 616.5 994.6 622.6 1000.7 630 1007.6 639 1015.8 650.1 1032.8 674.1 1080.5 743" stroke="#f8b62d" stroke-width="1.43"/><path d="M933.3 588.1 936.7 590.4 940.3 592.4 944 594.2 947.9 595.5 954.9 597.3 970.6 599.8 974.9 600.9 978.8 602.3 983.3 604.5 987.8 607.2 992.5 610.7 997.6 614.9 1003.8 620.8 1010.9 628.1 1018.9 636.9 1028.2 647.7 1047.8 671.3 1102.7 738.8" stroke="#f9bb2d" stroke-width="1.41"/><path d="M933.3 588.1 937.1 590.3 941.1 592.2 945.3 593.8 949.7 595.1 957.6 596.6 975.3 598.7 980.1 599.7 984.5 601 989.6 603.1 994.6 605.7 999.9 609 1005.6 613.1 1012.6 618.8 1020.6 625.9 1029.5 634.4 1040.1 645 1062.1 668 1123.8 733.9" stroke="#fac02f" stroke-width="1.39"/><path d="M933.3 588.1 937.5 590.2 941.9 592 946.6 593.5 951.4 594.7 960.2 596 979.7 597.5 985 598.4 989.9 599.6 995.5 601.5 1001.1 603.9 1006.9 607.1 1013.2 611 1021 616.5 1029.8 623.4 1039.6 631.7 1051.3 642 1075.6 664.4 1143.8 728.5" stroke="#fac432" stroke-width="1.36"/><path d="M933.3 588.1 937.9 590.1 942.7 591.8 947.8 593.1 953 594.2 962.6 595.2 983.8 596.2 989.6 596.9 994.9 598 1001 599.7 1007.1 602 1013.5 605 1020.3 608.8 1028.8 614.1 1038.3 620.7 1049.1 628.7 1061.8 638.7 1088.2 660.4 1162.5 722.6" stroke="#fbc835" stroke-width="1.32"/><path d="M933.3 588.1 938.2 590 943.4 591.5 948.9 592.7 954.5 593.6 964.8 594.4 987.7 594.8 993.8 595.4 999.6 596.3 1006.1 597.8 1012.6 600 1019.5 602.8 1026.8 606.3 1036 611.4 1046.3 617.8 1057.8 625.5 1071.4 635.1 1099.9 656 1179.8 716.2" stroke="#fbcb39" stroke-width="1.29"/><path d="M933.3 588.1 938.5 589.8 944.1 591.2 949.9 592.3 955.9 593 966.8 593.5 991.1 593.3 997.7 593.7 1003.8 594.4 1010.8 595.8 1017.7 597.8 1025 600.4 1032.8 603.8 1042.5 608.6 1053.5 614.6 1065.8 622 1080.3 631.2 1110.6 651.4 1195.6 709.4" stroke="#fccf3c" stroke-width="1.25"/><path d="M933.3 588.1 938.8 589.7 944.6 590.9 950.7 591.8 957.1 592.4 968.6 592.6 994.2 591.7 1001.2 591.9 1007.6 592.5 1014.9 593.7 1022.3 595.4 1030 597.9 1038.2 601 1048.4 605.5 1060 611.3 1072.9 618.4 1088.2 627.2 1120.1 646.5 1209.7 702.2" stroke="#fcd33f" stroke-width="1.21"/><path d="M933.3 588.1 939.1 589.5 945.2 590.6 951.5 591.4 958.1 591.7 970.2 591.6 997 590 1004.2 590.1 1011 590.5 1018.6 591.4 1026.3 593 1034.3 595.2 1042.9 598.1 1053.6 602.4 1065.7 607.8 1079.2 614.5 1095.2 622.9 1128.5 641.4 1222.1 694.6" stroke="#fdd642" stroke-width="1.17"/><path d="M933.3 588.1 939.3 589.4 945.6 590.3 952.2 590.9 959.1 591.1 971.5 590.6 999.3 588.3 1006.9 588.1 1013.8 588.3 1021.8 589.1 1029.7 590.5 1038.1 592.5 1047 595.1 1058 599.1 1070.5 604.2 1084.6 610.5 1101.1 618.5 1135.7 636 1232.8 686.7" stroke="#fdda45" stroke-width="1.13"/><path d="M933.3 588.1 939.5 589.2 946 590 952.8 590.3 959.8 590.4 972.7 589.6 1001.3 586.5 1009 586.1 1016.2 586.1 1024.4 586.7 1032.5 587.8 1041.1 589.6 1050.3 592 1061.7 595.7 1074.6 600.5 1089 606.4 1106.1 613.9 1141.7 630.5 1241.6 678.5" stroke="#fdde49" stroke-width="1.09"/><path d="M933.3 588.1 939.6 589 946.2 589.6 953.2 589.8 960.4 589.6 973.6 588.5 1002.8 584.6 1010.7 584 1018 583.9 1026.4 584.2 1034.7 585.1 1043.6 586.7 1052.9 588.8 1064.6 592.2 1077.7 596.6 1092.5 602.2 1109.9 609.2 1146.3 624.9 1248.5 670.1" stroke="#fee14c" stroke-width="1.04"/><path d="M933.3 588.1 939.7 588.9 946.4 589.3 953.5 589.3 960.8 588.9 974.2 587.4 1003.9 582.8 1011.9 581.9 1019.4 581.6 1027.9 581.7 1036.3 582.4 1045.3 583.7 1054.8 585.6 1066.6 588.6 1080 592.7 1095 597.9 1112.7 604.4 1149.7 619.1 1253.5 661.6" stroke="#fee54f" stroke-width="0.99"/><path d="M933.3 588.1 939.8 588.7 946.6 588.9 953.7 588.7 961.1 588.2 974.6 586.3 1004.6 580.9 1012.7 579.8 1020.2 579.3 1028.7 579.1 1037.3 579.6 1046.3 580.7 1055.9 582.3 1067.9 585 1081.4 588.8 1096.5 593.5 1114.4 599.6 1151.7 613.3 1256.5 652.9" stroke="#ffe952" stroke-width="0.95"/></g>
<g fill="none"><path d="M937.5 587.9A4.5 1.5 0 0 0 929.1 587.9" stroke="#ffd46e" stroke-width="1.1"/><path d="M941.7 587.5A8.9 3.1 0 0 0 924.9 587.5" stroke="#ffd879" stroke-width="1.1"/><path d="M945.9 586.9A13.4 4.6 0 0 0 920.7 587" stroke="#ffdd85" stroke-width="1.1"/><path d="M950 586.2A17.9 6.1 0 0 0 916.5 586.2" stroke="#ffe190" stroke-width="1.1"/><path d="M954.2 585.4A22.3 7.6 0 0 0 912.4 585.4" stroke="#ffe59c" stroke-width="1.1"/><path d="M958.3 584.4A26.7 9.1 0 0 0 908.2 584.4" stroke="#ffe9a7" stroke-width="1.1"/><path d="M962.4 583.2A31.1 10.6 0 0 0 904.1 583.3" stroke="#ffedb2" stroke-width="1.1"/><path d="M966.5 582A35.4 12.1 0 0 0 900.1 582.1" stroke="#ffedb8" stroke-width="1.1"/><path d="M970.5 580.8A39.7 13.6 0 0 0 896 580.8" stroke="#ffecbd" stroke-width="1.1"/><path d="M974.5 579.4A44 15 0 0 0 892.1 579.5" stroke="#ffebc2" stroke-width="1.1"/><path d="M978.4 578A48.2 16.5 0 0 0 888.1 578.1" stroke="#ffebc7" stroke-width="1.1"/><path d="M982.4 576.6A52.4 17.9 0 0 0 884.2 576.7" stroke="#ffe7c8" stroke-width="1.1"/><path d="M986.3 575.2A56.5 19.3 0 0 0 880.2 575.3" stroke="#ffe3c9" stroke-width="1.1"/><path d="M990.2 573.8A60.7 20.8 0 0 0 876.3 573.9" stroke="#ffdfcb" stroke-width="1.1"/><path d="M994.1 572.4A64.9 22.2 0 0 0 872.4 572.5" stroke="#ffdbcc" stroke-width="1.1"/><path d="M998 571.1A69.1 23.6 0 0 0 868.5 571.2" stroke="#ffd7cd" stroke-width="1.1"/><path d="M1002 569.8A73.3 25.1 0 0 0 864.5 569.9" stroke="#ffd4cf" stroke-width="1.1"/><path d="M1006 568.7A77.6 26.5 0 0 0 860.5 568.8" stroke="#ffd0d0" stroke-width="1.1"/><path d="M1010.1 567.6A82 28 0 0 0 856.4 567.7" stroke="#ffccd1" stroke-width="1.1"/><path d="M1014.3 566.6A86.5 29.6 0 0 0 852.1 566.7" stroke="#fec5d0" stroke-width="1.1"/><path d="M1018.7 565.8A91.2 31.2 0 0 0 847.8 565.9" stroke="#fcbed0" stroke-width="1.1"/><path d="M1023.2 565.1A96 32.8 0 0 0 843.3 565.2" stroke="#fbb7cf" stroke-width="1.1"/><path d="M1027.9 564.6A101 34.5 0 0 0 838.5 564.7" stroke="#fab0cf" stroke-width="1.1"/><path d="M1032.9 564.2A106.3 36.4 0 0 0 833.6 564.3" stroke="#f9a9ce" stroke-width="1.1"/><path d="M1038.1 564A111.9 38.3 0 0 0 828.4 564.2" stroke="#f7a2cd" stroke-width="1.1"/><path d="M1043.6 564.1A117.7 40.3 0 0 0 822.8 564.2" stroke="#f69bcd" stroke-width="1.1"/><path d="M1049.5 564.3A124 42.4 0 0 0 816.9 564.5" stroke="#f594cc" stroke-width="1.1"/><path d="M1055.7 564.8A130.7 44.7 0 0 0 810.7 565" stroke="#f28bce" stroke-width="1.1"/><path d="M1062.5 565.6A137.9 47.2 0 0 0 803.9 565.8" stroke="#f082cf" stroke-width="1.1"/><path d="M1069.7 566.6A145.6 49.8 0 0 0 796.7 566.8" stroke="#ee7ad1" stroke-width="1.1"/><path d="M1077.4 567.8A153.9 52.6 0 0 0 788.9 568" stroke="#eb71d2" stroke-width="1.1"/><path d="M1085.8 569.3A162.8 55.7 0 0 0 780.6 569.6" stroke="#e968d4" stroke-width="1.1"/><path d="M1094.8 571.1A172.5 59 0 0 0 771.5 571.4" stroke="#e65fd6" stroke-width="1.1"/><path d="M1104.6 573.2A182.9 62.6 0 0 0 761.7 573.5" stroke="#e456d8" stroke-width="1.1"/><path d="M1115.2 575.6A194.2 66.4 0 0 0 751.1 575.9" stroke="#e14cdb" stroke-width="1.1"/><path d="M1126.6 578.3A206.4 70.6 0 0 0 739.7 578.5" stroke="#de43dd" stroke-width="1.1"/><path d="M1138.9 581.2A219.5 75.1 0 0 0 982.7 534.4M981.8 534.3A219.5 75.1 0 0 0 978.9 534.1M977.1 533.9A219.5 75.1 0 0 0 975.2 533.8M972.4 533.6A219.5 75.1 0 0 0 970.5 533.5M895.2 533.6A219.5 75.1 0 0 0 893.3 533.7M890.5 533.9A219.5 75.1 0 0 0 888.6 534M886.7 534.1A219.5 75.1 0 0 0 883.9 534.4M883 534.4A219.5 75.1 0 0 0 727.3 581.5" stroke="#dc39e0" stroke-width="1.1"/><path d="M1152.3 584.5A233.8 80 0 0 0 1001.7 536M1000.7 535.9A233.8 80 0 0 0 998.7 535.7M997.7 535.6A233.8 80 0 0 0 995.8 535.5M869.8 535.5A233.8 80 0 0 0 867.9 535.7M866.9 535.8A233.8 80 0 0 0 864.9 536M864 536.1A233.8 80 0 0 0 714 584.8" stroke="#d930e3" stroke-width="1.1"/><path d="M1166.7 588.1A249.2 85.2 0 0 0 1014.4 537.3M1011.3 537A249.2 85.2 0 0 0 1009.3 536.8M856.3 536.9A249.2 85.2 0 0 0 854.2 537.1M851.1 537.5A249.2 85.2 0 0 0 767.4 554.3M766.5 554.6A249.2 85.2 0 0 0 699.5 588.4" stroke="#d626e6" stroke-width="1.1"/><path d="M1182.3 592A265.9 90.9 0 0 0 1137 565.4M1136.2 565.1A265.9 90.9 0 0 0 1088.6 550M1087.7 549.8A265.9 90.9 0 0 0 1024.2 538.4M841.3 538.5A265.9 90.9 0 0 0 683.9 592.3" stroke="#d41fe7" stroke-width="1.1"/><path d="M1199.2 596.1A283.9 97.1 0 0 0 1033.9 539.4M831.6 539.5A283.9 97.1 0 0 0 667 596.5" stroke="#d118e8" stroke-width="1.1"/><path d="M1217.4 600.6A303.3 103.7 0 0 0 1132.3 558.7M1131.3 558.4A303.3 103.7 0 0 0 1082.6 546.7M1081.5 546.5A303.3 103.7 0 0 0 1033.3 539M832.1 539.2A303.3 103.7 0 0 0 734.3 558.7M733.3 559A303.3 103.7 0 0 0 648.8 601" stroke="#cf11e9" stroke-width="1.1"/><path d="M1236.9 605.4A324.2 110.9 0 0 0 1077.9 545M1076.7 544.8A324.2 110.9 0 0 0 1061.3 542.4M1060 542.2A324.2 110.9 0 0 0 1041.5 539.7M823.8 539.9A324.2 110.9 0 0 0 805.3 542.4M804 542.6A324.2 110.9 0 0 0 727.1 558.7M726 559A324.2 110.9 0 0 0 629.2 605.9" stroke="#cc0aeb" stroke-width="1.1"/></g>
<path d="M933.2 477.8 921.5 485.2 911.2 493.2 902.2 501.8 894.8 510.8 890.5 517.5 886.8 524.8 884.2 532.5 883.5 536.8 883.2 537.2 883.2 538.8 882.8 539.2 882.5 548.5 882.8 548.8 882.8 551.8 883.2 552.2 884.2 557.8 886.8 564.5 887.5 565.2 889.2 568.5 892.2 572.5 899.5 579.5 903.8 582.5 909.5 585.5 918.8 588.8 923.2 589.5 923.5 589.8 925.2 589.8 925.5 590.2 928.2 590.2 928.5 590.5 938.2 590.5 938.5 590.2 941.2 590.2 941.5 589.8 943.2 589.8 943.5 589.5 947.8 588.8 949.2 588.2 952.2 587.5 957.2 585.2 957.8 585.2 963.8 581.8 967.5 579.2 974.2 572.8 978.8 566.2 981.5 560.5 982.5 557.5 983.2 553.5 983.5 553.2 983.5 551.5 983.8 551.2 984.2 543.5 983.8 543.2 983.8 539.5 983.5 539.2 982.8 534.2 980.8 527.5 976.8 518.8 970.8 509.5 963.5 500.8 953.8 491.8 944.2 484.5Z" fill="url(#g_drop)"/>
<g fill="none"><path d="M933.3 478 926.6 482.6 920.5 487.2 914.7 491.9 909.4 496.5 904.6 501.3 900.1 506.1 896.2 510.9 892.8 515.7 889.8 520.5 887.3 525.4 885.4 530.2 883.9 534.9 883 539.7 882.6 544.2 882.7 548.7 883.3 553" stroke="#ffef79" stroke-width="1.50"/><path d="M933.3 478 925.9 483.3 919.2 488.6 913 493.9 907.4 499.2 902.4 504.6 897.8 510 893.9 515.4 890.5 520.8 887.7 526.2 885.5 531.5 883.9 536.8 883 541.9 882.7 547 883.1 551.9 884 556.7 885.7 561.2" stroke="#fff07e" stroke-width="1.50"/><path d="M933.3 478 925.5 483.9 918.5 489.7 911.9 495.7 906 501.6 900.8 507.6 896.1 513.7 892.2 519.6 889 525.6 886.4 531.5 884.6 537.3 883.5 543 883.2 548.6 883.6 553.8 884.8 558.9 886.7 563.7 889.3 568.2" stroke="#fff185" stroke-width="1.50"/><path d="M933.3 478 925.2 484.4 917.7 491 910.9 497.5 904.9 504.1 899.6 510.7 895 517.1 891.3 523.5 888.2 530 886 536.2 884.6 542.4 884 548.4 884.2 554.1 885.3 559.6 887.3 564.7 890.1 569.4 893.6 573.7" stroke="#fff18a" stroke-width="1.50"/><path d="M933.3 478 924.9 485 917.3 492.1 910.4 499.2 904.4 506.3 899.1 513.3 894.6 520.3 891 527.2 888.1 534 886.2 540.7 885.2 547.1 885.1 553.2 885.4 556.2 885.9 559.1 886.7 561.9 887.7 564.6 888.9 567.2 890.3 569.6 892 571.9 893.9 574.1 898.1 578" stroke="#fff290" stroke-width="1.50"/><path d="M933.3 478 924.9 485.5 917.2 493.2 910.3 500.8 904.2 508.3 899.1 515.7 894.7 523.2 891.2 530.5 888.7 537.5 887.1 544.5 886.4 551.1 886.5 554.3 886.8 557.4 887.3 560.3 888.1 563.2 889.1 566 890.3 568.6 891.8 571.1 893.5 573.5 895.5 575.7 897.7 577.8 900.1 579.7 902.6 581.3" stroke="#fff395" stroke-width="1.50"/><path d="M933.3 478 925 485.9 917.4 494 910.6 502 904.6 510 899.5 517.9 895.4 525.5 892.2 533 889.8 540.3 888.5 547.5 888.2 550.9 888.1 554.2 888.3 557.4 888.7 560.5 889.4 563.5 890.3 566.4 891.5 569.1 892.9 571.7 894.6 574.1 896.5 576.3 898.6 578.4 900.9 580.3 903.4 582 906.1 583.5" stroke="#fff49b" stroke-width="1.50"/><path d="M933.3 478 925.2 486.3 917.7 494.8 911.2 503.2 905.4 511.5 900.5 519.6 896.5 527.7 893.5 535.5 891.4 542.9 890.2 550.1 890 553.7 890.1 557.1 890.4 560.2 891 563.3 891.8 566.4 892.8 569.2 894.2 571.8 895.7 574.3 897.5 576.6 899.5 578.8 901.7 580.7 904.2 582.4 906.8 583.9 909.6 585.2" stroke="#fff5a1" stroke-width="1.50"/><path d="M933.3 478 925.4 486.8 918.2 495.6 911.9 504.3 906.5 512.8 901.8 521.2 898.1 529.5 895.2 537.5 893.3 545.1 892.4 552.4 892.3 555.9 892.4 559.3 892.8 562.6 893.4 565.7 894.3 568.7 895.5 571.4 896.8 574.1 898.4 576.4 900.3 578.7 902.3 580.7 904.6 582.5 907.1 584.1 909.8 585.4 912.6 586.5" stroke="#fff4a5" stroke-width="1.50"/><path d="M933.3 478 925.7 487.2 919 496.2 912.9 505.3 907.8 514.1 903.4 522.7 899.9 531.2 897.2 539.4 895.5 547.2 894.8 554.6 894.7 558.2 895 561.5 895.4 564.8 896.1 567.9 897.1 570.8 898.2 573.5 899.7 576.1 901.3 578.4 903.2 580.5 905.2 582.3 907.4 584 909.9 585.4 912.6 586.6 915.4 587.5" stroke="#fff2a9" stroke-width="1.50"/><path d="M933.3 478 926.3 487.4 919.8 496.8 914.1 506.2 909.3 515.3 905.2 524.2 901.9 532.9 899.6 541.1 898.1 549 897.4 556.5 897.7 563.4 898.2 566.7 899 569.7 899.9 572.6 901.1 575.2 902.5 577.6 904.1 579.9 905.9 581.9 907.9 583.7 910.1 585.2 912.6 586.5 915.1 587.5 917.8 588.3" stroke="#fff1ad" stroke-width="1.50"/><path d="M933.3 478 926.7 487.8 920.8 497.4 915.6 506.9 911 516.3 907.3 525.5 904.3 534.2 902.2 542.6 900.8 550.6 900.3 558.2 900.7 565.1 901.2 568.3 902 571.3 902.9 574.2 904.1 576.8 905.4 579.2 907 581.3 908.7 583.2 910.7 584.9 912.8 586.3 915 587.4 917.5 588.3 920.1 588.9" stroke="#ffefb1" stroke-width="1.50"/><path d="M933.3 478 927.3 488 921.9 497.9 917.2 507.6 913.1 517.1 909.7 526.4 907 535.3 905.1 543.8 903.9 551.8 903.5 559.5 903.9 566.5 905.1 572.7 906 575.5 907.1 578 908.3 580.3 909.8 582.4 911.4 584.2 913.2 585.8 915.2 587.1 917.3 588.1 919.6 588.8 922 589.3" stroke="#ffedb5" stroke-width="1.50"/><path d="M933.3 478 927.9 488.3 923 498.4 918.8 508.4 915.2 518 912.1 527.5 909.8 536.5 908.1 545 907.1 553.1 906.8 560.8 907.2 567.7 908.3 573.8 910.2 579.1 911.3 581.4 912.7 583.3 914.2 585.1 915.8 586.6 917.6 587.8 919.5 588.7 921.6 589.3 923.8 589.6" stroke="#ffedb9" stroke-width="1.50"/><path d="M933.3 478 928.6 488.5 924.4 498.7 920.7 508.8 917.5 518.7 914.9 528.2 912.8 537.4 911.4 546.1 910.5 554.2 910.3 561.9 910.7 568.8 911.7 574.9 913.4 580.1 914.4 582.3 915.6 584.2 917 585.9 918.4 587.3 920 588.4 921.7 589.2 923.5 589.7 925.5 589.9" stroke="#ffebbd" stroke-width="1.50"/><path d="M933.3 478 929.3 488.6 925.7 499.1 922.5 509.5 919.9 519.4 917.7 529.1 916 538.2 914.8 546.9 914.1 555.2 913.9 562.8 914.3 569.8 915.2 575.8 916.6 580.9 918.6 584.9 919.7 586.5 921 587.8 922.3 588.8 923.8 589.6 925.4 590 927 590.1" stroke="#ffe9c1" stroke-width="1.50"/><path d="M933.3 478 930.1 488.7 927.2 499.3 924.6 509.8 922.5 519.8 920.7 529.4 919.3 538.8 918.3 547.5 917.8 555.8 917.6 563.5 917.9 570.4 918.7 576.4 919.9 581.4 921.5 585.4 923.4 588.2 924.5 589.2 925.7 589.8 927 590.2 928.3 590.2" stroke="#ffe8c5" stroke-width="1.50"/><path d="M933.3 478 928.7 499.5 925.1 520 923.8 529.7 922.7 539.2 922 548.1 921.6 556.3 921.5 564 921.7 570.9 922.3 576.9 923.2 581.9 924.4 585.8 925.9 588.5 926.7 589.4 927.6 590 928.6 590.3 929.6 590.3" stroke="#ffe6c9" stroke-width="1.50"/><path d="M933.3 478 930.2 499.8 927.8 520.4 926.2 539.7 925.4 556.8 925.5 571.4 925.9 577.4 926.6 582.3 927.4 586.1 928.4 588.8 929.6 590.2 930.3 590.5 930.9 590.4" stroke="#ffe5cd" stroke-width="1.50"/><path d="M933.3 478 931.7 499.9 930.5 520.5 929.7 539.9 929.4 557 929.4 571.6 929.9 582.5 930.3 586.3 930.9 588.9 931.5 590.3 931.8 590.5 932.1 590.4" stroke="#ffe3d1" stroke-width="1.50"/><path d="M933.3 478 933.3 590.4" stroke="#ffddd3" stroke-width="1.50"/><path d="M933.3 478 934.9 499.9 936.1 520.5 936.9 539.9 937.2 557 937.2 571.6 936.7 582.5 936.3 586.3 935.7 588.9 935.1 590.3 934.8 590.5 934.5 590.4" stroke="#ffd7d5" stroke-width="1.50"/><path d="M933.3 478 936.4 499.8 938.8 520.4 940.4 539.7 941.2 556.8 941.1 571.4 940.7 577.4 940 582.3 939.2 586.1 938.2 588.8 937 590.2 936.4 590.5 935.7 590.4" stroke="#ffd1d7" stroke-width="1.50"/><path d="M933.3 478 937.9 499.5 941.5 520 942.8 529.7 943.9 539.2 944.6 548.1 945 556.3 945.1 564 944.9 570.9 944.3 576.9 943.4 581.9 942.2 585.8 940.7 588.5 939.9 589.4 939 590 938 590.3 937 590.3" stroke="#ffc9d9" stroke-width="1.50"/><path d="M933.3 478 936.5 488.7 939.4 499.3 942 509.8 944.1 519.8 945.9 529.4 947.3 538.8 948.3 547.5 948.8 555.8 949 563.5 948.7 570.4 947.9 576.4 946.7 581.4 945.1 585.4 943.2 588.2 942.1 589.2 940.9 589.8 939.6 590.2 938.3 590.2" stroke="#ffc3db" stroke-width="1.50"/><path d="M933.3 478 937.3 488.6 940.9 499.1 944.1 509.5 946.7 519.4 948.9 529.1 950.6 538.2 951.8 546.9 952.5 555.2 952.7 562.8 952.3 569.8 951.4 575.8 950 580.9 948 584.9 946.9 586.5 945.6 587.8 944.3 588.8 942.8 589.6 941.2 590 939.6 590.1" stroke="#ffbcdd" stroke-width="1.50"/><path d="M933.3 478 938 488.5 942.2 498.7 945.9 508.8 949.1 518.7 951.7 528.2 953.8 537.4 955.2 546.1 956.1 554.2 956.3 561.9 955.9 568.8 954.9 574.9 953.2 580.1 952.2 582.3 951 584.2 949.6 585.9 948.2 587.3 946.6 588.4 944.9 589.2 943.1 589.7 941.1 589.9" stroke="#ffb5de" stroke-width="1.50"/><path d="M933.3 478 938.7 488.3 943.6 498.4 947.8 508.4 951.4 518 954.5 527.5 956.8 536.5 958.5 545 959.5 553.1 959.8 560.8 959.4 567.7 958.3 573.8 956.4 579.1 955.3 581.4 953.9 583.3 952.4 585.1 950.8 586.6 949 587.8 947.1 588.7 945 589.3 942.8 589.6" stroke="#ffafe0" stroke-width="1.50"/><path d="M933.3 478 939.3 488 944.7 497.9 949.4 507.6 953.5 517.1 956.9 526.4 959.6 535.3 961.5 543.8 962.7 551.8 963.1 559.5 962.7 566.5 961.5 572.7 960.6 575.5 959.5 578 958.3 580.3 956.8 582.4 955.2 584.2 953.4 585.8 951.4 587.1 949.3 588.1 947 588.8 944.6 589.3" stroke="#fda5e1" stroke-width="1.50"/><path d="M933.3 478 939.9 487.8 945.8 497.4 951 506.9 955.6 516.3 959.3 525.5 962.3 534.2 964.4 542.6 965.8 550.6 966.3 558.2 965.9 565.1 965.4 568.3 964.6 571.3 963.7 574.2 962.5 576.8 961.2 579.2 959.6 581.3 957.9 583.2 955.9 584.9 953.8 586.3 951.6 587.4 949.1 588.3 946.5 588.9" stroke="#fb9be3" stroke-width="1.50"/><path d="M933.3 478 940.3 487.4 946.8 496.8 952.5 506.2 957.3 515.3 961.4 524.2 964.7 532.9 967 541.1 968.5 549 969.2 556.5 968.9 563.4 968.4 566.7 967.6 569.7 966.7 572.6 965.5 575.2 964.1 577.6 962.5 579.9 960.7 581.9 958.7 583.7 956.5 585.2 954 586.5 951.5 587.5 948.8 588.3" stroke="#f991e4" stroke-width="1.50"/><path d="M933.3 478 940.9 487.2 947.6 496.2 953.7 505.3 958.8 514.1 963.2 522.7 966.7 531.2 969.4 539.4 971.1 547.2 971.8 554.6 971.9 558.2 971.6 561.5 971.2 564.8 970.5 567.9 969.5 570.8 968.4 573.5 966.9 576.1 965.3 578.4 963.4 580.5 961.4 582.3 959.2 584 956.7 585.4 954 586.6 951.2 587.5" stroke="#f786e5" stroke-width="1.50"/><path d="M933.3 478 941.2 486.8 948.4 495.6 954.7 504.3 960.1 512.8 964.8 521.2 968.5 529.5 971.4 537.5 973.3 545.1 974.2 552.4 974.3 555.9 974.2 559.3 973.8 562.6 973.2 565.7 972.3 568.7 971.1 571.4 969.8 574.1 968.2 576.4 966.3 578.7 964.3 580.7 962 582.5 959.5 584.1 956.8 585.4 954 586.5" stroke="#f57ce6" stroke-width="1.50"/><path d="M933.3 478 941.4 486.3 948.9 494.8 955.4 503.2 961.2 511.5 966.1 519.6 970.1 527.7 973.1 535.5 975.2 543 976.4 550.3 976.6 553.8 976.5 557.2 976.2 560.5 975.6 563.6 974.7 566.5 973.7 569.3 972.3 572 970.8 574.5 969 576.8 966.9 578.9 964.7 580.8 962.2 582.6 959.5 584.1 956.7 585.4" stroke="#f371e8" stroke-width="1.50"/><path d="M933.3 478 941.6 485.9 949.2 494 956 502 962 510 967.1 517.9 971.2 525.5 974.4 533 976.8 540.3 978.1 547.5 978.4 550.9 978.5 554.2 978.3 557.4 977.9 560.5 977.2 563.5 976.3 566.4 975.1 569.1 973.7 571.7 972 574.1 970.1 576.3 968 578.4 965.7 580.3 963.2 582 960.5 583.5" stroke="#f167e9" stroke-width="1.50"/><path d="M933.3 478 941.7 485.5 949.4 493.2 956.2 500.6 962.2 508.2 967.4 515.6 971.8 523 975.3 530.2 977.8 537.3 979.5 544.1 980.2 550.8 980.1 553.9 979.9 557 979.4 560 978.6 562.9 977.7 565.7 976.4 568.3 975 570.8 973.3 573.2 971.4 575.4 969.3 577.4 966.9 579.4 964.4 581.1" stroke="#ef5dea" stroke-width="1.50"/><path d="M933.3 478 941.7 485 949.3 492.1 956.2 499.2 962.2 506.3 967.5 513.3 972 520.3 975.6 527.2 978.5 534 980.4 540.7 981.4 547.2 981.5 553.4 981.2 556.3 980.6 559.2 979.9 562 978.9 564.7 977.6 567.2 976.2 569.7 974.5 572 972.7 574.2 968.4 578.1" stroke="#ed57eb" stroke-width="1.50"/><path d="M933.3 478 941.4 484.4 948.9 491 955.7 497.5 961.7 504.1 967 510.7 971.6 517.1 975.3 523.5 978.4 530 980.6 536.2 982 542.4 982.6 548.4 982.4 554.1 981.3 559.6 979.3 564.7 976.5 569.4 973 573.7" stroke="#e952ec" stroke-width="1.50"/><path d="M933.3 478 941.1 483.9 948.3 489.8 954.9 495.9 960.7 501.8 965.9 507.7 970.6 513.9 974.5 519.8 977.7 525.8 980.2 531.7 982.1 537.6 983.1 543.3 983.4 548.8 982.9 554.2 981.7 559.2 979.8 564 977.1 568.4" stroke="#e74dec" stroke-width="1.50"/><path d="M933.3 478 940.5 483.1 947.2 488.4 953.4 493.8 959 499 964.1 504.4 968.6 509.8 972.6 515.2 976 520.6 978.8 526 981 531.4 982.6 536.7 983.6 541.8 983.9 546.8 983.6 551.8 982.6 556.4 981 561" stroke="#e548ed" stroke-width="1.50"/><path d="M933.3 478 939.8 482.4 945.9 487 951.7 491.7 957 496.4 961.9 501.1 966.3 506 970.2 510.7 973.7 515.5 976.7 520.4 979.1 525.1 981.1 530 982.6 534.7 983.6 539.3 984 543.9 983.9 548.4 983.3 552.7" stroke="#e242ed" stroke-width="1.50"/><path d="M933.3 478 944.6 485.7 949.7 489.6 954.6 493.6 959 497.7 963 501.6 966.8 505.7 970.2 509.9 973.3 514 975.9 518.2 978.3 522.4 980.2 526.6 981.7 530.8 982.8 534.8 983.5 538.9 983.9 542.9" stroke="#e03ded" stroke-width="1.50"/><path d="M933.3 478 942.9 484.3 951.7 490.9 959.4 497.6 966.1 504.4 971.7 511.3 976.2 518.2 978.1 521.8 979.7 525.3 981 528.8 982.1 532.3" stroke="#dd38ee" stroke-width="1.50"/><path d="M933.3 478 941.2 483 948.5 488.1 955.1 493.4 961.1 498.9 966.4 504.4 970.9 510 974.7 515.6 977.8 521.3" stroke="#da33ef" stroke-width="1.50"/><path d="M933.3 478 939.5 481.7 945.3 485.7 950.8 489.8 955.8 493.9 960.5 498.1 964.7 502.5 968.4 506.8 971.7 511.3" stroke="#da33ef" stroke-width="1.50"/><path d="M933.3 478 942.5 483.7 950.7 489.6 958.1 495.8 964.3 502.2" stroke="#da33ef" stroke-width="1.50"/><path d="M933.3 478 939.7 481.8 945.7 485.8 951.1 489.9 956.1 494.2" stroke="#da33ef" stroke-width="1.50"/><path d="M933.3 478 942 483.3 949.7 488.9" stroke="#da33ef" stroke-width="1.50"/><path d="M933.3 478 938.9 481.4 944 484.8" stroke="#da33ef" stroke-width="1.50"/><path d="M933.3 478 940.2 482.3" stroke="#da33ef" stroke-width="1.50"/><path d="M933.3 478 938 481" stroke="#da33ef" stroke-width="1.50"/><path d="M933.3 478 936.4 480" stroke="#da33ef" stroke-width="1.50"/><path d="M933.3 478 935.4 479.4" stroke="#da33ef" stroke-width="1.50"/><path d="M933.3 478 935 479.2" stroke="#da33ef" stroke-width="1.50"/><path d="M933.3 478 934.6 479" stroke="#da33ef" stroke-width="1.50"/><path d="M933.3 478 934.2 478.8" stroke="#da33ef" stroke-width="1.50"/><path d="M933.3 478 934 478.8" stroke="#e68949" stroke-width="1.50"/><path d="M933.3 478 933.8 478.7" stroke="#ea914c" stroke-width="1.50"/><path d="M933.3 478 933.6 478.6" stroke="#ee9a4e" stroke-width="1.50"/><path d="M933.3 478 933.5 478.6" stroke="#f1a251" stroke-width="1.50"/><path d="M933.3 478 933.3 478.6" stroke="#f5aa54" stroke-width="1.50"/><path d="M933.3 478 933.1 478.6" stroke="#f5ae55" stroke-width="1.50"/><path d="M933.3 478 933 478.6" stroke="#f6b355" stroke-width="1.50"/><path d="M933.3 478 932.8 478.7" stroke="#f7b755" stroke-width="1.50"/><path d="M933.3 478 932.7 478.7" stroke="#f8bc56" stroke-width="1.50"/><path d="M933.3 478 932.3 478.9" stroke="#f9c056" stroke-width="1.50"/><path d="M933.3 478 932 479" stroke="#f9c557" stroke-width="1.50"/><path d="M933.3 478 931.6 479.2" stroke="#fac957" stroke-width="1.50"/><path d="M933.3 478 931.2 479.4" stroke="#fbcd59" stroke-width="1.50"/><path d="M933.3 478 930.2 480" stroke="#fbd05b" stroke-width="1.50"/><path d="M933.3 478 928.9 480.7" stroke="#fcd35d" stroke-width="1.50"/><path d="M933.3 478 926.6 482.2" stroke="#fcd561" stroke-width="1.50"/><path d="M933.3 478 927.9 481.2 922.9 484.6" stroke="#fdd963" stroke-width="1.50"/><path d="M933.3 478 925 483.1 917.6 488.4" stroke="#fddc65" stroke-width="1.50"/><path d="M933.3 478 926.9 481.8 920.9 485.8 915.5 489.9 910.5 494.2" stroke="#fdde68" stroke-width="1.50"/><path d="M933.3 478 924.3 483.5 916.1 489.4 908.9 495.5 902.6 501.8" stroke="#fde16a" stroke-width="1.50"/><path d="M933.3 478 927.1 481.7 921.5 485.5 916.1 489.5 911.1 493.6 906.4 497.8 902.3 502.1 898.5 506.4 895.3 510.7" stroke="#fde56d" stroke-width="1.50"/><path d="M933.3 478 925.4 483 918.1 488.1 911.5 493.4 905.7 498.7 900.5 504.1 895.9 509.7 892.1 515.4 888.9 521" stroke="#fee770" stroke-width="1.50"/><path d="M933.3 478 923.7 484.3 915.1 490.7 907.3 497.4 900.7 504.2 895 511.2 890.4 518.1 888.5 521.7 886.9 525.2 885.6 528.6 884.6 532.2" stroke="#feea72" stroke-width="1.50"/><path d="M933.3 478 922 485.7 916.9 489.6 912.2 493.5 907.8 497.5 903.7 501.5 899.9 505.6 896.5 509.7 893.4 513.9 890.7 518.1 888.5 522.2 886.5 526.3 885 530.5 883.9 534.5 883.1 538.6 882.7 542.6" stroke="#ffed75" stroke-width="1.50"/></g>
<g fill="none" stroke-width="1.3"><path d="M931.6 479.1A1.7 0.6 0 1 0 935 479.1A1.7 0.6 0 1 0 931.6 479.1" stroke="#ed6a24" stroke-width="1.15"/><path d="M924.5 483.5A11.1 3.8 0 1 0 942 483.5" stroke="#ee7328" stroke-width="1.15"/><path d="M916.8 489A19.3 6.6 0 1 0 949.7 489" stroke="#f07c2b" stroke-width="1.15"/><path d="M909.7 494.9A26.4 9 0 1 0 956.9 494.9" stroke="#f2852e" stroke-width="1.15"/><path d="M903.4 501A32.4 11.1 0 1 0 963.1 500.9" stroke="#f38830" stroke-width="1.15"/><path d="M898 507.2A37.5 12.8 0 1 0 968.7 507.2" stroke="#f38b32" stroke-width="1.15"/><path d="M893.3 513.5A41.7 14.3 0 1 0 973.3 513.5" stroke="#f48e34" stroke-width="1.15"/><path d="M889.6 519.7A45 15.4 0 1 0 977 519.7" stroke="#f49136" stroke-width="1.15"/><path d="M886.7 525.9A47.5 16.2 0 1 0 979.8 525.8" stroke="#f49537" stroke-width="1.15"/><path d="M884.6 531.9A49.3 16.8 0 1 0 982 531.9" stroke="#f59839" stroke-width="1.15"/><path d="M883.3 537.7A50.3 17.2 0 1 0 983.3 537.8" stroke="#f59b3b" stroke-width="1.15"/><path d="M882.7 543.4A50.7 17.4 0 1 0 983.9 543.4" stroke="#f69e3d" stroke-width="1.15"/><path d="M882.8 548.8A50.5 17.3 0 1 0 983.8 548.7" stroke="#f6a13f" stroke-width="1.15"/><path d="M883.5 554A49.8 17 0 0 0 983.1 553.9" stroke="#f6a441" stroke-width="1.15"/><path d="M884.8 558.9A48.6 16.6 0 0 0 981.8 558.9" stroke="#f7a843" stroke-width="1.15"/><path d="M886.6 563.4A46.9 16 0 0 0 979.9 563.5" stroke="#f7ab45" stroke-width="1.15"/><path d="M889.1 567.8A44.8 15.3 0 0 0 977.5 567.8" stroke="#f8ad46" stroke-width="1.15"/><path d="M891.9 571.7A42.3 14.5 0 0 0 974.7 571.7" stroke="#f8b047" stroke-width="1.15"/><path d="M895.2 575.4A39.4 13.5 0 0 0 971.4 575.4" stroke="#f8b348" stroke-width="1.15"/><path d="M898.9 578.7A36.3 12.4 0 0 0 967.7 578.7" stroke="#f9b549" stroke-width="1.15"/><path d="M903.1 581.7A32.9 11.3 0 0 0 963.5 581.7" stroke="#f9b84a" stroke-width="1.15"/><path d="M907.8 584.4A29.3 10 0 0 0 958.8 584.4" stroke="#f9ba4b" stroke-width="1.15"/><path d="M912.6 586.5A25.5 8.7 0 0 0 953.8 586.6" stroke="#fabd4c" stroke-width="1.15"/><path d="M918.2 588.4A21.5 7.4 0 0 0 948.4 588.4" stroke="#fabf4c" stroke-width="1.15"/><path d="M925.1 589.8A17.4 5.9 0 0 0 941.5 589.8" stroke="#fbc24f" stroke-width="1.15"/></g>
<path d="M787.8 418.2 787.8 423.5 788.2 423.8 788.2 425.2 790.2 430.2 793.2 434.5 798.5 439.8 805.5 444.8 808.8 446.5 809.5 447.2 819.8 452.2 820.5 452.2 824.8 454.2 826.5 454.5 827.5 455.2 836.5 458.2 842.2 459.5 843.5 460.2 844.5 460.2 851.5 462.2 852.8 462.2 854.5 462.8 864.2 464.5 864.5 464.8 866.2 464.8 866.5 465.2 869.8 465.5 870.2 465.8 872.2 465.8 874.5 466.5 876.5 466.5 876.8 466.8 878.8 466.8 879.2 467.2 883.8 467.5 884.2 467.8 889.8 468.2 890.2 468.5 893.2 468.5 893.5 468.8 896.5 468.8 896.8 469.2 900.5 469.2 900.8 469.5 905.2 469.5 905.5 469.8 917.5 470.2 922.2 472.5 922.8 472.5 932.8 477.8 933.8 477.8 935.8 476.5 949.2 470.2 955.5 470.2 955.8 469.8 965.8 469.5 966.2 469.2 976.5 468.5 976.8 468.2 979.5 468.2 979.8 467.8 982.5 467.8 982.8 467.5 984.8 467.5 985.2 467.2 992.2 466.5 992.5 466.2 1002.2 464.8 1002.5 464.5 1012.2 462.8 1015.2 461.8 1016.5 461.8 1016.8 461.5 1020.5 460.8 1021.8 460.2 1025.5 459.5 1026.8 458.8 1027.8 458.8 1029.2 458.2 1030.2 458.2 1039.2 455.2 1040.2 454.5 1047.5 451.8 1049.2 450.8 1049.8 450.8 1056.5 447.5 1057.2 446.8 1062.2 444.2 1068.5 439.5 1073.2 434.8 1075.8 431.2 1077.8 427.2 1077.8 426.2 1078.5 424.8 1078.5 423.2 1078.8 422.8 1078.5 416.8 1076.8 412.2 1073.5 407.2 1068.5 402.2 1064.2 398.8 1057.2 394.5 1049.8 390.8 1049.2 390.8 1046.8 389.5 1046.2 389.5 1041.8 387.5 1030.2 383.5 1029.2 383.5 1023.2 381.5 1022.2 381.5 1015.2 379.5 1013.8 379.5 1012.2 378.8 1010.8 378.8 1009.2 378.2 1000.8 376.8 1000.5 376.5 998.8 376.5 998.5 376.2 996.8 376.2 994.5 375.5 992.5 375.5 990.2 374.8 988.2 374.8 987.8 374.5 985.5 374.5 985.2 374.2 982.8 374.2 982.5 373.8 980.2 373.8 979.8 373.5 977.2 373.5 976.8 373.2 966.2 372.5 965.8 372.2 961.8 372.2 961.5 371.8 948.8 371.5 948.5 371.2 918.2 371.2 917.8 371.5 905.2 371.8 904.8 372.2 900.8 372.2 900.5 372.5 896.5 372.5 896.2 372.8 889.8 373.2 889.5 373.5 886.8 373.5 886.5 373.8 884.2 373.8 883.8 374.2 881.5 374.2 881.2 374.5 874.2 375.2 873.8 375.5 866.2 376.5 864.2 377.2 862.5 377.2 862.2 377.5 855.8 378.5 855.5 378.8 851.5 379.5 851.2 379.8 842.2 381.8 840.8 382.5 839.8 382.5 837.5 383.5 833.2 384.5 831.2 385.5 830.2 385.5 829.2 386.2 826.5 386.8 825.5 387.5 823.8 387.8 820.5 389.5 818.2 390.2 808.8 394.8 801.5 399.5 798.5 401.8 791.8 408.8 789.2 413.5Z" fill="url(#g_bowl)"/>
<g fill="none"><path d="M1078.8 420.8 1060.1 425.6 1042.6 430.5 1025.8 435.7 1009.8 441.2 994.6 446.9 979.8 453.1 966.3 459.3 953.5 465.9" stroke="#ffeb57" stroke-width="1.35"/><path d="M1078.4 416.9 1059.7 422.2 1041.8 427.7 1024.7 433.5 1008.7 439.4 993.6 445.6 979 452.2 965.3 458.9 952.6 465.9" stroke="#ffec5e" stroke-width="1.35"/><path d="M1077 413 1058.6 418.8 1040.8 424.8 1023.8 431.1 1007.6 437.6 992.3 444.4 977.8 451.3 964.4 458.4 951.6 465.9" stroke="#ffed66" stroke-width="1.35"/><path d="M1074.8 409.2 1056.1 415.6 1038.7 422.1 1022 428.8 1006.1 435.8 991 443 976.5 450.5 963 458.1 950.4 465.9" stroke="#ffee6d" stroke-width="1.35"/><path d="M1071.7 405.4 1053.4 412.3 1035.9 419.5 1019.6 426.7 1003.7 434.3 988.7 442 974.5 449.9 961.4 457.9 949 466.2" stroke="#ffef74" stroke-width="1.35"/><path d="M1067.7 401.8 1050 409.2 1033 416.8 1016.7 424.6 1001.3 432.6 986.7 440.7 973 449 960 457.6 948 466.2" stroke="#fff07b" stroke-width="1.35"/><path d="M1062.9 398.2 1045.8 406.1 1029.4 414.1 1013.8 422.4 998.5 431 984.5 439.5 971 448.4 958.5 457.3 947 466.2" stroke="#fff182" stroke-width="1.35"/><path d="M1057.4 394.8 1040.6 403.4 1024.9 411.8 1009.9 420.5 995.4 429.5 982 438.4 969.1 447.6 957.2 456.8 946 466.2" stroke="#fff289" stroke-width="1.35"/><path d="M1051 391.6 1035.1 400.5 1020.2 409.5 1005.6 418.7 991.8 428.1 978.9 437.6 966.7 447.1 955.5 456.6 944.9 466.3" stroke="#fff18f" stroke-width="1.35"/><path d="M1043.9 388.5 1029 397.9 1015 407.2 1001.3 416.9 988.3 426.6 976.1 436.4 964.5 446.5 953.7 456.5 943.7 466.5" stroke="#ffef94" stroke-width="1.35"/><path d="M1036.2 385.6 1022.3 395.4 1008.9 405.3 996.2 415.3 984.2 425.4 972.9 435.6 962 445.9 952 456.2 942.6 466.6" stroke="#ffed99" stroke-width="1.35"/><path d="M1027.8 383 1015 393.1 1002.7 403.4 991.1 413.7 979.8 424.4 969.4 434.8 959.5 445.4 950.3 456 941.7 466.6" stroke="#ffeb9e" stroke-width="1.35"/><path d="M1018.8 380.6 1007.2 391 996.2 401.6 985.6 412.2 975.4 423.2 965.7 434.1 956.8 445 948.5 455.8 940.7 466.6" stroke="#ffe9a3" stroke-width="1.35"/><path d="M1009.3 378.4 999 389.1 989.2 400 979.8 410.9 970.7 422.1 962.1 433.3 954.2 444.4 946.8 455.4 939.9 466.4" stroke="#ffe8a8" stroke-width="1.35"/><path d="M999.4 376.5 990.4 387.5 981.6 398.9 973.5 410 965.6 421.5 958.2 432.8 951.3 444.1 944.9 455.3 938.9 466.5" stroke="#ffe6ad" stroke-width="1.35"/><path d="M989 374.8 981.4 386.1 974 397.7 967.2 409 960.5 420.7 954.3 432.2 948.5 443.7 943 455.3 937.9 466.6" stroke="#ffe4b2" stroke-width="1.35"/><path d="M978.3 373.5 972.2 384.9 966.2 396.7 960.7 408.2 955.3 420 950.2 431.7 945.5 443.3 941.1 455 937 466.5" stroke="#ffe2b7" stroke-width="1.35"/><path d="M967.3 372.4 958.2 395.9 949.9 419.5 942.5 443 936.1 466.4" stroke="#ffe0bc" stroke-width="1.35"/><path d="M956.1 371.7 950 395.4 944.4 419.1 939.4 443.1 935.2 466.6" stroke="#ffdec0" stroke-width="1.35"/><path d="M944.7 371.2 941.7 395 938.9 418.9 936.4 443 934.2 466.6" stroke="#ffdcc5" stroke-width="1.35"/><path d="M933.3 371.1 933.3 466.6" stroke="#ffd5c8" stroke-width="1.35"/><path d="M921.9 371.2 924.9 395 927.7 418.9 930.2 443 932.4 466.6" stroke="#ffcdcb" stroke-width="1.35"/><path d="M910.5 371.7 916.6 395.4 922.2 419.1 927.2 443.1 931.4 466.6" stroke="#ffc5cd" stroke-width="1.35"/><path d="M899.3 372.4 908.4 395.9 916.7 419.5 924.1 443 930.5 466.4" stroke="#ffbccf" stroke-width="1.35"/><path d="M888.3 373.5 894.4 384.9 900.4 396.7 905.9 408.2 911.3 420 916.4 431.7 921.1 443.3 925.5 455 929.6 466.5" stroke="#ffb4d2" stroke-width="1.35"/><path d="M877.6 374.8 885.2 386.1 892.6 397.7 899.4 409 906.1 420.7 912.3 432.2 918.1 443.7 923.6 455.3 928.7 466.6" stroke="#ffabd4" stroke-width="1.35"/><path d="M867.2 376.5 876.2 387.5 885 398.9 893.1 410 901 421.5 908.4 432.8 915.3 444.1 921.7 455.3 927.7 466.5" stroke="#ffa3d6" stroke-width="1.35"/><path d="M857.3 378.4 867.6 389.1 877.4 400 886.8 410.9 895.9 422.1 904.5 433.3 912.4 444.4 919.8 455.4 926.7 466.4" stroke="#ff9bd8" stroke-width="1.35"/><path d="M847.8 380.6 859.4 391 870.4 401.6 881 412.2 891.2 423.2 900.9 434.1 909.8 445 918.1 455.8 925.9 466.6" stroke="#fd8fda" stroke-width="1.35"/><path d="M838.8 383 851.6 393.1 863.9 403.4 875.5 413.7 886.8 424.4 897.2 434.8 907.1 445.4 916.3 456 924.9 466.6" stroke="#fa82dc" stroke-width="1.35"/><path d="M830.4 385.6 844.3 395.4 857.7 405.3 870.4 415.3 882.4 425.4 893.7 435.6 904.6 445.9 914.6 456.2 924 466.6" stroke="#f875dd" stroke-width="1.35"/><path d="M822.7 388.5 837.6 397.9 851.6 407.2 865.3 416.9 878.3 426.6 890.5 436.4 902.1 446.5 912.9 456.5 922.9 466.5" stroke="#f568df" stroke-width="1.35"/><path d="M815.6 391.6 831.5 400.5 846.4 409.5 861 418.7 874.8 428.1 887.7 437.6 899.9 447.1 911.1 456.6 921.7 466.3" stroke="#f35be0" stroke-width="1.35"/><path d="M809.2 394.8 826 403.4 841.7 411.8 856.7 420.5 871.2 429.5 884.6 438.4 897.5 447.6 909.4 456.8 920.6 466.2" stroke="#f04ee2" stroke-width="1.35"/><path d="M803.7 398.2 820.8 406.1 837.2 414.1 852.8 422.4 868.1 431 882.1 439.5 895.6 448.4 908.1 457.3 919.6 466.2" stroke="#ed41e4" stroke-width="1.35"/><path d="M798.9 401.8 816.6 409.2 833.6 416.8 849.9 424.6 865.3 432.6 879.9 440.7 893.6 449 906.6 457.6 918.6 466.2" stroke="#eb34e5" stroke-width="1.35"/><path d="M794.9 405.4 813.2 412.3 830.7 419.5 847 426.7 862.9 434.3 877.9 442 892.1 449.9 905.2 457.9 917.6 466.2" stroke="#e82de6" stroke-width="1.35"/><path d="M791.8 409.2 810.5 415.6 827.9 422.1 844.6 428.8 860.9 436 876 443.1 890.5 450.7 904 458.3 916.7 466.3" stroke="#e427e7" stroke-width="1.35"/><path d="M789.6 413 808 418.8 825.8 424.8 842.8 431.1 859 437.6 874.3 444.4 888.8 451.3 902.2 458.4 915 465.9" stroke="#e120e7" stroke-width="1.35"/><path d="M788.2 416.9 806.9 422.2 824.8 427.7 841.9 433.5 857.9 439.4 873 445.6 887.6 452.2 901.3 458.9 914 465.9" stroke="#de1ae8" stroke-width="1.35"/><path d="M787.8 420.8 806.5 425.6 824 430.5 840.8 435.7 856.8 441.2 872 446.9 886.8 453.1 900.3 459.3 913.1 465.9" stroke="#db13e9" stroke-width="1.35"/><path d="M788.2 424.7 806.3 428.8 823.8 433.3 840.6 438 856.2 443 871.1 448.2 885.5 453.8 898.8 459.5 911.4 465.5M932.4 477.4 933.3 478" stroke="#d80de9" stroke-width="1.35"/><path d="M789.6 428.6 807.5 432.2 824.4 436.1 840.6 440.3 856.1 444.8 870.9 449.6 884.9 454.6 898.1 460 910.4 465.6M932.4 477.4 933.3 478" stroke="#d406ea" stroke-width="1.35"/><path d="M791.8 432.4 809 435.5 825.1 438.8 841.1 442.5 856.1 446.5 870.3 450.7 883.9 455.3 896.7 460.1 908.7 465.3M931.2 476.7 933.3 478" stroke="#d100eb" stroke-width="0.85"/><path d="M794.9 436.2 811.2 438.7 827 441.6 842.3 444.8 856.5 448.2 870.6 452.1 883.6 456.1 895.9 460.5 907.8 465.3M929.9 476 933.3 478" stroke="#bf0000" stroke-width="0.85"/><path d="M798.9 439.9 814.2 441.9 828.7 444.2 842.8 446.8 856 449.6 868.7 452.7 880.9 456.2 892.6 459.9 903.7 464M927.4 474.7 933.3 478" stroke="#c10802" stroke-width="0.85"/><path d="M803.7 443.4 818 445 831.5 446.8 844.7 448.9 857.2 451.3 869.2 454 880.8 457 891.9 460.3 902.4 463.9M904.4 464.7 905 464.9M923.2 472.7 933.3 478" stroke="#c21003" stroke-width="0.85"/><path d="M809.2 446.8 821.6 447.9 833.4 449.1 845 450.7 855.9 452.5 866.6 454.5 876.7 456.8 886.6 459.3 896 462.1M897.5 462.6 901.5 464M919.7 471.1 926.8 474.5 933.3 478" stroke="#c41805" stroke-width="0.85"/><path d="M815.6 450.1 827.3 450.8 838.5 451.8 849.5 453 860.2 454.6 870.4 456.4 880.3 458.4 889.5 460.7 898.5 463.3M919.5 471.1 926.7 474.4 933.3 478" stroke="#c62006" stroke-width="0.85"/><path d="M822.7 453.1 841.9 454.1 859.8 455.8 868.3 457 876.7 458.5 884.7 460.1 892.5 461.9M893.8 462.3 894.7 462.5M919.5 471 926.7 474.4 933.3 478" stroke="#c72808" stroke-width="0.85"/><path d="M830.4 456 847.6 456.4 864 457.6 871.9 458.6 879.5 459.7 886.7 461.1 893.7 462.6M895.1 462.9 896.6 463.3M919.6 471.1 926.8 474.4 933.3 478" stroke="#c9300a" stroke-width="0.85"/><path d="M838.8 458.7 854.6 458.6 869.6 459.4 876.9 460.2 883.9 461.1 890.5 462.3 897 463.6M898.2 463.9 901 464.6M920 471.1 926.8 474.3 933.3 478" stroke="#cb380b" stroke-width="0.85"/><path d="M847.8 461.1 862.7 460.6 869.9 460.8 876.8 461.1 883.6 461.7 890 462.6 896.2 463.7 902.2 465M920.4 471 927.1 474.3 933.3 478" stroke="#cc410d" stroke-width="0.85"/><path d="M857.3 463.3 870 462.4 881.8 462.5 893.1 463.5 898.4 464.3 903.7 465.3M921 471 927.4 474.2 933.3 478" stroke="#d14b11" stroke-width="0.85"/><path d="M867.2 465.2 877.6 464.1 887.5 463.8 896.8 464.3 905.7 465.6M922.1 471.1 927.9 474.2 933.3 478" stroke="#d65614" stroke-width="0.85"/><path d="M877.6 466.8 885.9 465.5 893.8 464.9 901.3 465.1 908.4 466M923.3 471 928.6 474.2 933.3 478" stroke="#db6118" stroke-width="0.85"/><path d="M888.3 468.1 894.7 466.7 900.8 465.9 906.6 465.8 912.1 466.4M924.8 471 929.3 474.2 933.3 478" stroke="#e06b1b" stroke-width="0.85"/><path d="M899.3 469.2 903.9 467.7 908.3 466.8 912.5 466.4 916.5 466.8M926.6 471 930.1 474.1 933.3 478" stroke="#e5761f" stroke-width="0.85"/><path d="M910.5 470 913.5 468.4 916.4 467.3 919.1 466.9 921.7 467.1M928.7 471 931.1 474.1 933.3 478" stroke="#ea8122" stroke-width="0.85"/><path d="M921.9 470.4 923.4 468.8 924.8 467.7 926.1 467.2 927.5 467.3M930.9 471 932.2 474.1 933.3 478" stroke="#ee8b26" stroke-width="0.85"/><path d="M933.3 470.6 933.3 467.3M933.3 471 933.3 478" stroke="#f29529" stroke-width="0.85"/><path d="M944.7 470.4 943.2 468.8 941.8 467.7 940.5 467.2 939.1 467.3M935.7 471 934.4 474.1 933.3 478" stroke="#f39a2a" stroke-width="0.85"/><path d="M956.1 470 953.1 468.4 950.2 467.3 947.5 466.9 944.9 467.1M937.9 471 935.5 474.1 933.3 478" stroke="#f4a02a" stroke-width="0.85"/><path d="M967.3 469.2 962.7 467.7 958.3 466.8 954.1 466.4 950.1 466.8M940 471 936.5 474.1 933.3 478" stroke="#f5a52b" stroke-width="0.85"/><path d="M978.3 468.1 971.9 466.7 965.8 465.9 960 465.8 954.5 466.4M941.8 471 937.3 474.2 933.3 478" stroke="#f6ab2c" stroke-width="0.85"/><path d="M989 466.8 980.7 465.5 972.8 464.9 965.3 465.1 958.2 466M943.3 471 938 474.2 933.3 478" stroke="#f7b02c" stroke-width="0.85"/><path d="M999.4 465.2 989 464.1 979.1 463.8 969.8 464.3 960.9 465.6M944.5 471.1 938.7 474.2 933.3 478" stroke="#f8b62d" stroke-width="0.85"/><path d="M1009.3 463.3 996.6 462.4 984.8 462.5 973.5 463.5 968.2 464.3 962.9 465.3M945.6 471 939.2 474.2 933.3 478" stroke="#f9bb2d" stroke-width="0.85"/><path d="M1018.8 461.1 1003.9 460.6 996.7 460.8 989.8 461.1 983 461.7 976.6 462.6 970.4 463.7 964.4 465M946.2 471 939.5 474.3 933.3 478" stroke="#fac02f" stroke-width="0.85"/><path d="M1027.8 458.7 1012.3 458.6 997.9 459.3 984.1 460.9 977.4 462 971.1 463.3M969.9 463.6 965.6 464.6M946.6 471.1 939.8 474.3 933.3 478" stroke="#fac432" stroke-width="0.85"/><path d="M1036.2 456 1019 456.4 1002.6 457.6 994.7 458.6 987.1 459.7 979.9 461.1 972.9 462.6M971.5 462.9 970 463.3M947 471.1 939.8 474.4 933.3 478" stroke="#fbc835" stroke-width="0.85"/><path d="M1043.9 453.1 1024.7 454.1 1006.8 455.8 998.3 457 989.9 458.5 981.9 460.1 974.1 461.9M972.8 462.3 971.6 462.6M947.1 471 939.9 474.4 933.3 478" stroke="#fbcb39" stroke-width="0.85"/><path d="M1051 450.1 1038.8 450.8 1027.3 451.8 1016 453.2 1005.3 454.7 994.8 456.6 984.7 458.8 975 461.3 965.9 464M947.1 471.1 939.9 474.4 933.3 478" stroke="#fccf3c" stroke-width="0.85"/><path d="M1057.4 446.8 1044.5 447.9 1031.9 449.3 1019.6 451 1008 453 996.8 455.2 985.9 457.8 975.7 460.6 965.9 463.7M946.9 471.1 939.8 474.5 933.3 478" stroke="#fcd33f" stroke-width="0.85"/><path d="M1062.9 443.4 1048.2 445 1034.2 446.9 1020.6 449.1 1007.5 451.7 994.9 454.6 983.1 457.8 971.9 461.2 961.3 465M943.4 472.7 933.3 478" stroke="#fdd642" stroke-width="0.85"/><path d="M1067.7 439.9 1052.4 441.9 1037.9 444.2 1023.8 446.8 1010.6 449.6 997.9 452.7 985.7 456.2 974 459.9 962.9 464M961.5 464.6 960.6 464.9M939.2 474.7 933.3 478" stroke="#fdda45" stroke-width="0.85"/><path d="M1071.7 436.2 1055.4 438.7 1039.6 441.6 1024.3 444.8 1010.1 448.2 996 452.1 983 456.1 970.7 460.5 958.8 465.3M936.7 476 933.3 478" stroke="#fdde49" stroke-width="0.85"/><path d="M1074.8 432.4 1057.6 435.5 1041 438.9 1025 442.6 1010.1 446.6 995.5 451 982 455.5 969.2 460.4 957 465.6M935.4 476.7 933.3 478" stroke="#fee14c" stroke-width="0.85"/><path d="M1077 428.6 1059.1 432.2 1042.2 436.1 1026 440.3 1010.5 444.8 995.7 449.6 981.7 454.6 968.5 460 956.2 465.6M934.7 477.1 933.3 478" stroke="#fee54f" stroke-width="1.35"/><path d="M1078.4 424.7 1060.3 428.8 1042.8 433.3 1026 438 1010.4 443 995.5 448.2 981.1 453.8 967.8 459.5 955.2 465.5M934.2 477.4 933.3 478" stroke="#ffe952" stroke-width="1.35"/></g>
<g fill="none" stroke-width="1.7"><path d="M1074.3 433.1A145.5 49.8 0 1 0 792.4 433.3" stroke="#db0500" stroke-width="1.75"/><path d="M792.4 433.3A145.5 49.8 0 0 0 1074.3 433.1" stroke="#db0500" stroke-width="1.5"/><path d="M1052.2 437A122.7 42 0 1 0 814.5 437.2" stroke="#db0900" stroke-width="1.55"/><path d="M814.5 437.2A122.7 42 0 0 0 1052.2 437" stroke="#db0900" stroke-width="0.85"/><path d="M1031.9 441.3A101.7 34.8 0 1 0 834.8 441.5" stroke="#db0d00" stroke-width="1.5"/><path d="M834.8 441.5A101.7 34.8 0 0 0 863.3 458M863.6 458.1A101.7 34.8 0 0 0 870 460M870.3 460.1A101.7 34.8 0 0 0 1031.9 441.3" stroke="#db0d00" stroke-width="0.85"/><path d="M1013.1 446A82.4 28.2 0 1 0 853.5 446.2" stroke="#db1100" stroke-width="1.45"/><path d="M853.5 446.2A82.4 28.2 0 0 0 858.6 451M858.8 451.1A82.4 28.2 0 0 0 868.2 456.4M868.4 456.4A82.4 28.2 0 0 0 872.3 458M872.6 458.1A82.4 28.2 0 0 0 879.3 460.4M879.5 460.4A82.4 28.2 0 0 0 987.3 460.4M987.6 460.3A82.4 28.2 0 0 0 988.4 460M988.7 460A82.4 28.2 0 0 0 992.6 458.7M992.8 458.6A82.4 28.2 0 0 0 998.4 456.4M998.7 456.3A82.4 28.2 0 0 0 1007 451.7M1007.2 451.6A82.4 28.2 0 0 0 1013.1 446" stroke="#db1100" stroke-width="0.85"/><path d="M996 451A64.7 22.1 0 1 0 870.7 451.1" stroke="#db1400" stroke-width="1.4"/><path d="M870.7 451.1A64.7 22.1 0 0 0 874.3 454.7M874.4 454.8A64.7 22.1 0 0 0 875.3 455.4M875.4 455.5A64.7 22.1 0 0 0 876.3 456.1M876.4 456.1A64.7 22.1 0 0 0 878 457.1M878.1 457.1A64.7 22.1 0 0 0 878.6 457.4M878.7 457.5A64.7 22.1 0 0 0 879.2 457.7M879.4 457.8A64.7 22.1 0 0 0 879.8 458M880 458.1A64.7 22.1 0 0 0 880.5 458.4M880.8 458.5A64.7 22.1 0 0 0 881.1 458.7M881.5 458.8A64.7 22.1 0 0 0 882 459.1M882.1 459.1A64.7 22.1 0 0 0 882.7 459.4M882.8 459.4A64.7 22.1 0 0 0 883.6 459.7M883.7 459.8A64.7 22.1 0 0 0 884.3 460M884.5 460.1A64.7 22.1 0 0 0 885.2 460.4M885.4 460.5A64.7 22.1 0 0 0 886 460.7M886.4 460.8A64.7 22.1 0 0 0 887 461M887.4 461.2A64.7 22.1 0 0 0 888 461.4M888.4 461.5A64.7 22.1 0 0 0 889 461.7M889.4 461.8A64.7 22.1 0 0 0 890 462M890.4 462.2A64.7 22.1 0 0 0 891.1 462.3M891.5 462.5A64.7 22.1 0 0 0 892.4 462.7M892.6 462.8A64.7 22.1 0 0 0 893.5 463M893.7 463.1A64.7 22.1 0 0 0 908.5 466M958.3 466A64.7 22.1 0 0 0 973.1 463M973.3 463A64.7 22.1 0 0 0 974.2 462.7M974.4 462.7A64.7 22.1 0 0 0 975.5 462.3M975.7 462.3A64.7 22.1 0 0 0 976.4 462.1M976.8 462A64.7 22.1 0 0 0 977.4 461.8M977.8 461.6A64.7 22.1 0 0 0 978.4 461.4M978.8 461.3A64.7 22.1 0 0 0 979.4 461.1M979.8 461A64.7 22.1 0 0 0 980.4 460.7M980.8 460.6A64.7 22.1 0 0 0 981.4 460.4M981.6 460.3A64.7 22.1 0 0 0 982.1 460.1M982.5 460A64.7 22.1 0 0 0 983 459.7M983.2 459.7A64.7 22.1 0 0 0 983.8 459.4M984.1 459.3A64.7 22.1 0 0 0 985.5 458.7M985.6 458.6A64.7 22.1 0 0 0 986.1 458.4M986.3 458.3A64.7 22.1 0 0 0 986.8 458M986.9 458A64.7 22.1 0 0 0 987.4 457.7M987.6 457.6A64.7 22.1 0 0 0 988 457.4M988.2 457.3A64.7 22.1 0 0 0 989.7 456.4M989.9 456.3A64.7 22.1 0 0 0 991.8 455M991.9 454.9A64.7 22.1 0 0 0 996 451" stroke="#db1400" stroke-width="0.85"/><path d="M980.4 456.3A48.6 16.6 0 1 0 885.6 455.4M885.7 455.4A48.6 16.6 0 0 0 886.3 456.4" stroke="#de2a0a" stroke-width="1.35"/><path d="M886.3 456.4A48.6 16.6 0 0 0 887.4 457.7M887.5 457.7A48.6 16.6 0 0 0 887.8 458M887.9 458.1A48.6 16.6 0 0 0 888.2 458.4M888.4 458.5A48.6 16.6 0 0 0 888.6 458.7M888.7 458.8A48.6 16.6 0 0 0 889 459M889.1 459.1A48.6 16.6 0 0 0 889.5 459.3M889.7 459.5A48.6 16.6 0 0 0 889.9 459.7M890 459.7A48.6 16.6 0 0 0 890.5 460.1M890.7 460.2A48.6 16.6 0 0 0 891 460.4M891.2 460.5A48.6 16.6 0 0 0 891.6 460.7M891.8 460.8A48.6 16.6 0 0 0 892.2 461.1M892.3 461.1A48.6 16.6 0 0 0 892.8 461.4M893 461.5A48.6 16.6 0 0 0 893.5 461.7M893.8 461.8A48.6 16.6 0 0 0 894.1 462M895.4 462.6A48.6 16.6 0 0 0 895.7 462.7M971 462.6A48.6 16.6 0 0 0 971.4 462.5M971.8 462.3A48.6 16.6 0 0 0 972.1 462.2M972.6 462A48.6 16.6 0 0 0 972.8 461.8M973.2 461.7A48.6 16.6 0 0 0 973.7 461.4M973.9 461.3A48.6 16.6 0 0 0 974.3 461.1M974.5 461A48.6 16.6 0 0 0 974.8 460.8M975.1 460.6A48.6 16.6 0 0 0 975.4 460.5M975.7 460.3A48.6 16.6 0 0 0 976.1 460.1M976.2 460A48.6 16.6 0 0 0 976.6 459.7M976.8 459.6A48.6 16.6 0 0 0 977 459.4M977.2 459.3A48.6 16.6 0 0 0 977.6 459M977.7 459A48.6 16.6 0 0 0 978 458.7M978.1 458.6A48.6 16.6 0 0 0 978.4 458.4M978.5 458.3A48.6 16.6 0 0 0 978.7 458.1M978.9 457.9A48.6 16.6 0 0 0 979.1 457.7M979.2 457.6A48.6 16.6 0 0 0 979.4 457.4M979.5 457.3A48.6 16.6 0 0 0 979.7 457.1M979.8 457A48.6 16.6 0 0 0 980 456.7M980.1 456.6A48.6 16.6 0 0 0 980.4 456.3" stroke="#de2a0a" stroke-width="0.85"/><path d="M967.1 460A33.9 11.6 0 1 0 899.6 460.4M899.7 460.5A33.9 11.6 0 0 0 899.9 461M900 461.2A33.9 11.6 0 0 0 900.1 461.4M900.2 461.4A33.9 11.6 0 0 0 900.4 461.8M966.3 461.6A33.9 11.6 0 0 0 966.4 461.4M966.5 461.3A33.9 11.6 0 0 0 967.1 460" stroke="#e04014" stroke-width="1.3"/><path d="M900.4 461.8A33.9 11.6 0 0 0 900.6 462M900.7 462.1A33.9 11.6 0 0 0 900.9 462.4M901 462.5A33.9 11.6 0 0 0 901.2 462.7M901.4 462.8A33.9 11.6 0 0 0 901.6 463M901.7 463.1A33.9 11.6 0 0 0 902 463.4M902.2 463.6A33.9 11.6 0 0 0 902.4 463.7M902.7 463.9A33.9 11.6 0 0 0 902.9 464M903.8 464.6A33.9 11.6 0 0 0 903.9 464.7M963.8 464A33.9 11.6 0 0 0 964.1 463.8M964.2 463.7A33.9 11.6 0 0 0 964.4 463.6M964.6 463.3A33.9 11.6 0 0 0 964.9 463.1M965.1 463A33.9 11.6 0 0 0 965.3 462.7M965.4 462.6A33.9 11.6 0 0 0 966.2 461.7" stroke="#e04014" stroke-width="0.85"/><path d="M954 465.7A20.7 7.1 0 0 0 954 465.4M954 465.3A20.7 7.1 0 0 0 912.7 465M912.7 465A20.7 7.1 0 0 0 912.6 465.4M912.6 465.4A20.7 7.1 0 0 0 912.6 465.7" stroke="#e6501b" stroke-width="1.25"/><path d="M919.8 471A20.7 7.1 0 0 0 946.8 471" stroke="#e6501b" stroke-width="0.85"/><path d="M925.3 473.7A8.9 3 0 0 0 941.3 473.7" stroke="#eb6121" stroke-width="0.85"/></g></svg></div>
</body></html>
